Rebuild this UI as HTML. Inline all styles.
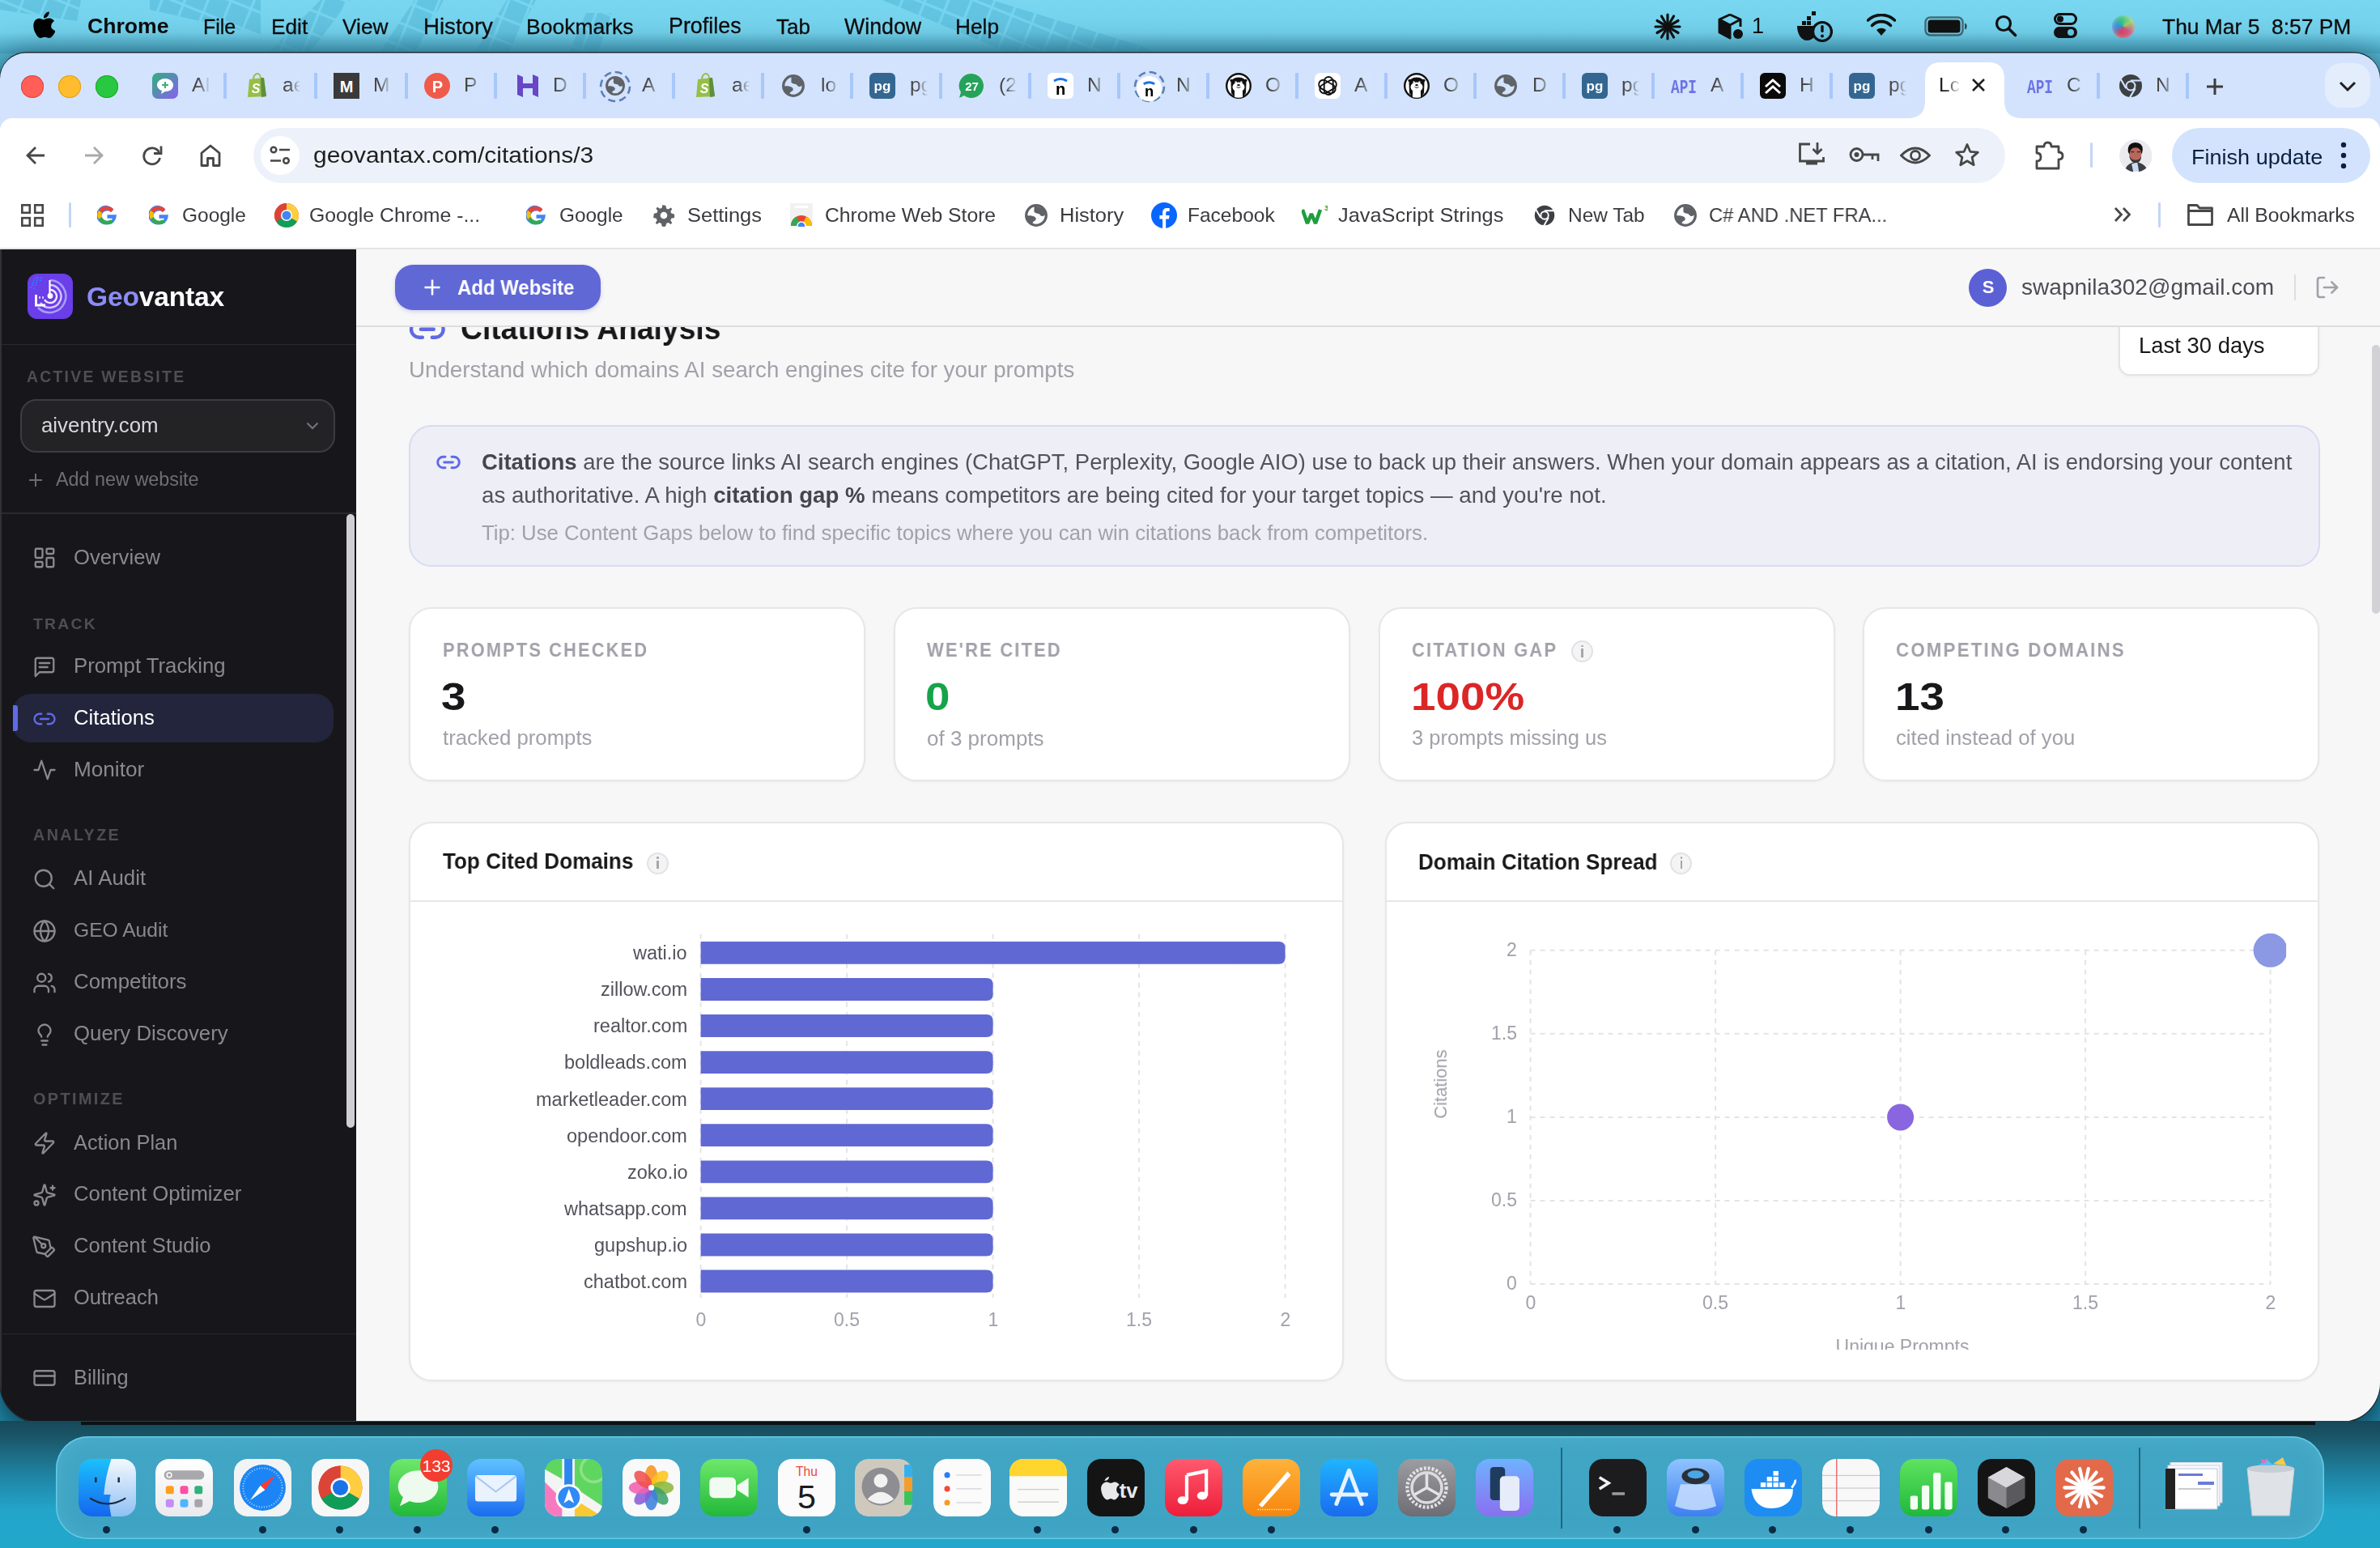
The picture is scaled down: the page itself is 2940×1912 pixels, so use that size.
<!DOCTYPE html>
<html><head><meta charset="utf-8"><title>Geovantax</title>
<style>*{box-sizing:border-box;margin:0;padding:0}
html,body{width:2940px;height:1912px;overflow:hidden}
body{position:relative;font-family:"Liberation Sans",sans-serif;background:#1f9cc4}
div,svg{position:absolute}
.t{white-space:pre;line-height:1;will-change:transform}
</style></head><body>
<div style="left:0;top:0;width:2940px;height:1912px;background:linear-gradient(180deg,#78d6f0 0px,#74d2ec 40px,#58bcd9 64px,#3a9fc0 400px,#2a9cc2 1600px,#22a7cb 1912px)"></div><svg style="left:0;top:0" width="1500" height="66" viewBox="0 0 1500 66"><defs><pattern id="sq" width="26.5" height="26.5" patternUnits="userSpaceOnUse" patternTransform="rotate(22)"><rect x="1.5" y="1.5" width="23.5" height="23.5" fill="#4fb3d3" opacity="0.5"/></pattern></defs><polygon points="0,0 100,0 95,26 0,12" fill="url(#sq)"/><polygon points="185,0 322,0 322,42 292,36 185,12" fill="url(#sq)"/><polygon points="330,66 382,66 432,0 396,0" fill="url(#sq)"/><polygon points="468,66 512,66 548,0 512,0" fill="url(#sq)"/><polygon points="586,66 628,66 662,0 626,0" fill="url(#sq)"/><polygon points="702,66 738,66 756,16 724,16" fill="url(#sq)"/><polygon points="1090,0 1225,0 1440,66 1248,66" fill="url(#sq)"/></svg><div style="left:0;top:40px;width:2940px;height:26px;background:linear-gradient(180deg,rgba(40,110,140,0) 0%,rgba(40,110,140,0.2) 100%)"></div><svg style="left:40px;top:14px" width="28" height="33" viewBox="0 0 170 200"><path fill="#000" d="M150 155c-8 18-12 26-22 41-14 21-34 47-59 47-22 0-28-14-58-14-30 0-37 15-59 15" transform="translate(0,-40)" opacity="0"/><path fill="#000" d="M141 106c0-27 22-40 23-41-13-19-32-21-39-21-17-2-32 10-40 10-8 0-21-9-34-9C33 45 8 61 8 100c0 24 9 50 21 66 10 14 19 26 32 26 13-1 18-8 33-8 15 0 20 8 33 8 14 0 23-13 31-25 10-14 14-28 14-29-1 0-31-12-31-32zM115 28c7-9 12-21 11-33-10 1-23 7-30 16-7 8-13 20-11 32 11 1 23-6 30-15z" transform="translate(0,8)"/></svg><div class=t style="left:108.0px;top:19.4px;font-size:26.60px;font-weight:700;color:#0d0d0d;letter-spacing:0em;font-family:'Liberation Sans';">Chrome</div><div class=t style="left:250.8px;top:21.0px;font-size:24.95px;font-weight:400;color:#0d0d0d;letter-spacing:0em;font-family:'Liberation Sans';-webkit-text-stroke:0.3px #0d0d0d">File</div><div class=t style="left:334.8px;top:19.9px;font-size:26.23px;font-weight:400;color:#0d0d0d;letter-spacing:0em;font-family:'Liberation Sans';-webkit-text-stroke:0.3px #0d0d0d">Edit</div><div class=t style="left:422.5px;top:19.9px;font-size:26.28px;font-weight:400;color:#0d0d0d;letter-spacing:0em;font-family:'Liberation Sans';-webkit-text-stroke:0.3px #0d0d0d">View</div><div class=t style="left:522.5px;top:18.7px;font-size:27.61px;font-weight:400;color:#0d0d0d;letter-spacing:0em;font-family:'Liberation Sans';-webkit-text-stroke:0.3px #0d0d0d">History</div><div class=t style="left:650.4px;top:19.7px;font-size:26.51px;font-weight:400;color:#0d0d0d;letter-spacing:0em;font-family:'Liberation Sans';-webkit-text-stroke:0.3px #0d0d0d">Bookmarks</div><div class=t style="left:826.4px;top:19.4px;font-size:26.87px;font-weight:400;color:#0d0d0d;letter-spacing:0em;font-family:'Liberation Sans';-webkit-text-stroke:0.3px #0d0d0d">Profiles</div><div class=t style="left:958.6px;top:20.1px;font-size:26.05px;font-weight:400;color:#0d0d0d;letter-spacing:0em;font-family:'Liberation Sans';-webkit-text-stroke:0.3px #0d0d0d">Tab</div><div class=t style="left:1042.6px;top:19.5px;font-size:26.74px;font-weight:400;color:#0d0d0d;letter-spacing:0em;font-family:'Liberation Sans';-webkit-text-stroke:0.3px #0d0d0d">Window</div><div class=t style="left:1180.0px;top:19.9px;font-size:26.26px;font-weight:400;color:#0d0d0d;letter-spacing:0em;font-family:'Liberation Sans';-webkit-text-stroke:0.3px #0d0d0d">Help</div><div class=t style="left:2671.0px;top:19.6px;font-size:26.41px;font-weight:400;color:#0d0d0d;letter-spacing:0em;font-family:'Liberation Sans';-webkit-text-stroke:0.3px #0d0d0d">Thu Mar 5  8:57 PM</div><svg style="left:2043px;top:16px" width="34" height="34" viewBox="0 0 34 34"><g stroke="#111" stroke-width="3.2" stroke-linecap="round"><line x1="17" y1="17" x2="32.0" y2="17.0"/><line x1="17" y1="17" x2="30.0" y2="24.5"/><line x1="17" y1="17" x2="24.5" y2="30.0"/><line x1="17" y1="17" x2="17.0" y2="32.0"/><line x1="17" y1="17" x2="9.5" y2="30.0"/><line x1="17" y1="17" x2="4.0" y2="24.5"/><line x1="17" y1="17" x2="2.0" y2="17.0"/><line x1="17" y1="17" x2="4.0" y2="9.5"/><line x1="17" y1="17" x2="9.5" y2="4.0"/><line x1="17" y1="17" x2="17.0" y2="2.0"/><line x1="17" y1="17" x2="24.5" y2="4.0"/><line x1="17" y1="17" x2="30.0" y2="9.5"/></g></svg><svg style="left:2121px;top:16px" width="34" height="34" viewBox="0 0 34 34"><path d="M16 2 L29 8 L29 17 M16 2 L3 8 L3 24 L16 31 L16 15 L3 8 M16 15 L29 8" fill="none" stroke="#111" stroke-width="3" stroke-linejoin="round"/><path d="M3 8 L16 15 L16 31 L3 24Z" fill="#111"/><circle cx="26" cy="26" r="6" fill="#111"/></svg><div class=t style="left:2164.0px;top:18.6px;font-size:27.00px;font-weight:400;color:#0d0d0d;letter-spacing:0em;font-family:'Liberation Sans';">1</div><svg style="left:2218px;top:14px" width="46" height="38" viewBox="0 0 46 38"><path d="M2 18 h26 c0 10-6 18-14 18 C7 36 2 28 2 18z" fill="#111"/><rect x="8" y="12" width="5" height="5" fill="#111"/><rect x="14" y="12" width="5" height="5" fill="#111"/><rect x="14" y="6" width="5" height="5" fill="#111"/><rect x="20" y="0" width="5" height="5" fill="#111"/><circle cx="33" cy="25" r="11.5" fill="#6cc9e6" stroke="#111" stroke-width="3.2"/><rect x="31.3" y="17" width="3.4" height="9" rx="1.5" fill="#111"/><circle cx="33" cy="30.5" r="2" fill="#111"/></svg><svg style="left:2306px;top:17px" width="36" height="28" viewBox="0 0 36 28"><path d="M18 27 L12 20 A9 9 0 0 1 24 20 Z" fill="#111"/><path d="M6.5 14.5 A16 16 0 0 1 29.5 14.5" fill="none" stroke="#111" stroke-width="3.6" stroke-linecap="round"/><path d="M1.5 8 A24 24 0 0 1 34.5 8" fill="none" stroke="#111" stroke-width="3.6" stroke-linecap="round"/></svg><svg style="left:2377px;top:20px" width="54" height="25" viewBox="0 0 54 25"><rect x="1.5" y="1.5" width="46" height="22" rx="6" fill="none" stroke="#1a1a1a" stroke-opacity="0.55" stroke-width="2.5"/><rect x="4.5" y="4.5" width="40" height="16" rx="3.5" fill="#111"/><path d="M50.5 9 q2.5 3.5 0 7" fill="#1a1a1a" stroke="#1a1a1a" stroke-opacity=".6" stroke-width="2"/></svg><svg style="left:2464px;top:18px" width="28" height="28" viewBox="0 0 28 28"><circle cx="11" cy="11" r="8.5" fill="none" stroke="#111" stroke-width="3.2"/><line x1="17.5" y1="17.5" x2="25.5" y2="25.5" stroke="#111" stroke-width="3.6" stroke-linecap="round"/></svg><svg style="left:2537px;top:16px" width="29" height="31" viewBox="0 0 29 31"><rect x="1.5" y="1.5" width="26" height="12" rx="6" fill="none" stroke="#111" stroke-width="3"/><circle cx="8" cy="7.5" r="4" fill="#111"/><rect x="0" y="17" width="29" height="14" rx="7" fill="#111"/><circle cx="21" cy="24" r="4" fill="#6cc9e6"/></svg><div style="left:2609px;top:19px;width:28px;height:28px;border-radius:50%;background:conic-gradient(from 200deg,#e0455e,#3b8fe0,#35c28a,#9ad070,#d45a8a,#e0455e);box-shadow:inset 0 0 6px rgba(255,255,255,0.5)"></div><div style="left:-1px;top:64px;width:2942px;height:1694px;border-radius:34px 34px 50px 50px;background:#1c2c33;box-shadow:0 14px 40px 8px rgba(8,40,55,0.75)"></div><div style="left:0;top:0;width:2940px;height:1912px;clip-path:inset(65.5px 0px 156px 0px round 32px 32px 48px 48px)"><div style="left:0;top:65px;width:2940px;height:110px;background:#d3e3fd"></div><div style="left:26px;top:93px;width:28px;height:28px;border-radius:50%;background:#ff5f57;box-shadow:inset 0 0 0 1px #e2463f"></div><div style="left:72px;top:93px;width:28px;height:28px;border-radius:50%;background:#febc2e;box-shadow:inset 0 0 0 1px #e1a116"></div><div style="left:118px;top:93px;width:28px;height:28px;border-radius:50%;background:#28c840;box-shadow:inset 0 0 0 1px #1aab29"></div><div style="left:276.0px;top:90px;width:4px;height:32px;background:#a8c7fa"></div><div style="left:388.0px;top:90px;width:4px;height:32px;background:#a8c7fa"></div><div style="left:499.6px;top:90px;width:4px;height:32px;background:#a8c7fa"></div><div style="left:610.0px;top:90px;width:4px;height:32px;background:#a8c7fa"></div><div style="left:720.0px;top:90px;width:4px;height:32px;background:#a8c7fa"></div><div style="left:829.6px;top:90px;width:4px;height:32px;background:#a8c7fa"></div><div style="left:939.7px;top:90px;width:4px;height:32px;background:#a8c7fa"></div><div style="left:1050.0px;top:90px;width:4px;height:32px;background:#a8c7fa"></div><div style="left:1160.0px;top:90px;width:4px;height:32px;background:#a8c7fa"></div><div style="left:1270.2px;top:90px;width:4px;height:32px;background:#a8c7fa"></div><div style="left:1379.8px;top:90px;width:4px;height:32px;background:#a8c7fa"></div><div style="left:1489.7px;top:90px;width:4px;height:32px;background:#a8c7fa"></div><div style="left:1599.6px;top:90px;width:4px;height:32px;background:#a8c7fa"></div><div style="left:1709.6px;top:90px;width:4px;height:32px;background:#a8c7fa"></div><div style="left:1820.0px;top:90px;width:4px;height:32px;background:#a8c7fa"></div><div style="left:1929.6px;top:90px;width:4px;height:32px;background:#a8c7fa"></div><div style="left:2039.7px;top:90px;width:4px;height:32px;background:#a8c7fa"></div><div style="left:2150.0px;top:90px;width:4px;height:32px;background:#a8c7fa"></div><div style="left:2259.8px;top:90px;width:4px;height:32px;background:#a8c7fa"></div><div style="left:2589.6px;top:90px;width:4px;height:32px;background:#a8c7fa"></div><div style="left:2699.7px;top:90px;width:4px;height:32px;background:#a8c7fa"></div><svg style="left:187.8px;top:90px" width="32" height="32" viewBox="0 0 32 32"><defs><linearGradient id="g1" x1="0" y1="0" x2="1" y2="1"><stop offset="0" stop-color="#2fb37a"/><stop offset="1" stop-color="#8b5cf6"/></linearGradient></defs><rect width="32" height="32" rx="7" fill="url(#g1)"/><path d="M16 7 c6 0 10 4 10 8 c0 5-4 8-10 8 l-5 3 l1-4 c-3-1-6-4-6-7 c0-4 4-8 10-8z" fill="#fff"/><path d="M12 15 h8 M16 11 v8" stroke="#2fb37a" stroke-width="2"/></svg><svg style="left:302.0px;top:90px" width="32" height="32" viewBox="0 0 32 32"><path d="M6 8 L24 6 L27 29 L4 30 Z" fill="#95bf47"/><path d="M20 6 L24 6 L27 29 L21 30Z" fill="#5e8e3e"/><path d="M11 8 c0-5 3-7 5-7 c2 0 4 2 4 6" fill="none" stroke="#95bf47" stroke-width="2"/><text x="14" y="25" font-family="Liberation Sans" font-weight="700" font-style="italic" font-size="16" fill="#fff" text-anchor="middle">S</text></svg><svg style="left:412.0px;top:90px" width="32" height="32" viewBox="0 0 32 32"><rect width="32" height="32" fill="#3a3a3a"/><text x="16" y="24" font-family="Liberation Sans" font-weight="700" font-size="20" fill="#fff" text-anchor="middle">M</text></svg><svg style="left:524.0px;top:90px" width="32" height="32" viewBox="0 0 32 32"><circle cx="16" cy="16" r="16" fill="#f05a4a"/><text x="16.5" y="23.5" font-family="Liberation Sans" font-weight="700" font-size="20" fill="#fff" text-anchor="middle">P</text></svg><svg style="left:636.0px;top:90px" width="32" height="32" viewBox="0 0 32 32"><path d="M3 2 L10 5 L10 13 L22 13 L22 2 L29 5 L29 30 L22 27 L22 19 L10 19 L10 30 L3 27 Z" fill="#6747c7"/></svg><svg style="left:740.0px;top:86.5px" width="40" height="40" viewBox="0 0 40 40"><circle cx="20" cy="20" r="18" fill="none" stroke="#5b7fb8" stroke-width="2.6" stroke-dasharray="9 5"/></svg><svg style="left:747.6px;top:94px" width="24" height="24" viewBox="0 0 32 32"><g transform="scale(1.1428)"><circle cx="14" cy="14" r="12.3" fill="none" stroke="#5f6368" stroke-width="3.3"/><path d="M11.5 3 C15 2.5 22 4 25.5 9 C26.5 12 24.5 15 21.5 15 C19 15 19 12.5 17 12 C14 11.5 10.5 11 11.5 7 Z" fill="#5f6368"/><path d="M1.5 14.5 C5 14 10 14 12.5 16 C14.5 17.5 14 20.5 11.5 21 C10 21.5 9.5 23.5 9 25.5 C5 23.5 2 19.5 1.5 14.5 Z" fill="#5f6368"/></g></svg><svg style="left:856.0px;top:90px" width="32" height="32" viewBox="0 0 32 32"><path d="M6 8 L24 6 L27 29 L4 30 Z" fill="#95bf47"/><path d="M20 6 L24 6 L27 29 L21 30Z" fill="#5e8e3e"/><path d="M11 8 c0-5 3-7 5-7 c2 0 4 2 4 6" fill="none" stroke="#95bf47" stroke-width="2"/><text x="14" y="25" font-family="Liberation Sans" font-weight="700" font-style="italic" font-size="16" fill="#fff" text-anchor="middle">S</text></svg><svg style="left:966.0px;top:92px" width="28" height="28" viewBox="0 0 32 32"><g transform="scale(1.1428)"><circle cx="14" cy="14" r="12.3" fill="none" stroke="#5f6368" stroke-width="3.3"/><path d="M11.5 3 C15 2.5 22 4 25.5 9 C26.5 12 24.5 15 21.5 15 C19 15 19 12.5 17 12 C14 11.5 10.5 11 11.5 7 Z" fill="#5f6368"/><path d="M1.5 14.5 C5 14 10 14 12.5 16 C14.5 17.5 14 20.5 11.5 21 C10 21.5 9.5 23.5 9 25.5 C5 23.5 2 19.5 1.5 14.5 Z" fill="#5f6368"/></g></svg><svg style="left:1074.0px;top:90px" width="32" height="32" viewBox="0 0 32 32"><rect x="0" y="0" width="32" height="32" rx="6" fill="#336791"/><text x="16" y="22" font-family="Liberation Sans" font-weight="700" font-size="17" fill="#fff" text-anchor="middle">pg</text></svg><svg style="left:1184.0px;top:90px" width="32" height="32" viewBox="0 0 32 32"><path d="M16 1 a15 15 0 1 1 -9 27 l-6 3 l2-7 a15 15 0 0 1 13-23z" fill="#25a35a"/><text x="16.5" y="22" font-family="Liberation Sans" font-weight="700" font-size="15" fill="#fff" text-anchor="middle">27</text></svg><svg style="left:1294.0px;top:90px" width="32" height="32" viewBox="0 0 32 32"><rect width="32" height="32" rx="6" fill="#fff"/><path d="M8 10 q8-5 16 0" stroke="#1a73e8" stroke-width="3" fill="none"/><text x="16" y="27" font-family="Liberation Sans" font-weight="700" font-size="20" fill="#000" text-anchor="middle">n</text></svg><svg style="left:1399.5px;top:86.5px" width="40" height="40" viewBox="0 0 40 40"><circle cx="20" cy="20" r="18" fill="none" stroke="#5b7fb8" stroke-width="2.6" stroke-dasharray="9 5"/></svg><svg style="left:1404.0px;top:94px" width="31" height="31" viewBox="0 0 32 32"><circle cx="16" cy="16" r="16" fill="#fff"/><path d="M9 10 q7-4 14 0" stroke="#1a73e8" stroke-width="3" fill="none"/><text x="16" y="26" font-family="Liberation Sans" font-weight="700" font-size="19" fill="#000" text-anchor="middle">n</text></svg><svg style="left:1514.0px;top:90px" width="32" height="32" viewBox="0 0 32 32"><circle cx="16" cy="16" r="14.8" fill="#fff" stroke="#111" stroke-width="2.4"/><path d="M6.5 12 Q7 6 16 5.5 Q25 6 25.5 12 L25 25 Q23 28 21 29 L21 22 Q16 24 11 22 L11 29 Q9 28 7 25Z" fill="#111"/><circle cx="7.2" cy="9.5" r="1.8" fill="#111"/><circle cx="24.8" cy="9.5" r="1.8" fill="#111"/><ellipse cx="16" cy="17.5" rx="7.5" ry="6" fill="#fff"/><path d="M11 22 Q16 30 21 22 L21 30 Q16 31.5 11 30Z" fill="#fff"/><rect x="11.5" y="10.5" width="2.2" height="2.2" fill="#fff"/><rect x="18.3" y="10.5" width="2.2" height="2.2" fill="#fff"/><ellipse cx="16" cy="15.2" rx="1.8" ry="1.1" fill="#111"/><path d="M13.5 17.5 Q16 19.5 18.5 17.5" fill="none" stroke="#111" stroke-width="0.9"/></svg><svg style="left:1624.0px;top:90px" width="32" height="32" viewBox="0 0 32 32"><rect width="32" height="32" rx="7" fill="#fff"/><g fill="none" stroke="#111" stroke-width="1.9" transform="translate(16 16)"><rect x="-5.5" y="-11" width="11" height="22" rx="5.5" transform="rotate(0) translate(1.2 0)"/><rect x="-5.5" y="-11" width="11" height="22" rx="5.5" transform="rotate(60) translate(1.2 0)"/><rect x="-5.5" y="-11" width="11" height="22" rx="5.5" transform="rotate(120) translate(1.2 0)"/></g></svg><svg style="left:1734.0px;top:90px" width="32" height="32" viewBox="0 0 32 32"><circle cx="16" cy="16" r="14.8" fill="#fff" stroke="#111" stroke-width="2.4"/><path d="M6.5 12 Q7 6 16 5.5 Q25 6 25.5 12 L25 25 Q23 28 21 29 L21 22 Q16 24 11 22 L11 29 Q9 28 7 25Z" fill="#111"/><circle cx="7.2" cy="9.5" r="1.8" fill="#111"/><circle cx="24.8" cy="9.5" r="1.8" fill="#111"/><ellipse cx="16" cy="17.5" rx="7.5" ry="6" fill="#fff"/><path d="M11 22 Q16 30 21 22 L21 30 Q16 31.5 11 30Z" fill="#fff"/><rect x="11.5" y="10.5" width="2.2" height="2.2" fill="#fff"/><rect x="18.3" y="10.5" width="2.2" height="2.2" fill="#fff"/><ellipse cx="16" cy="15.2" rx="1.8" ry="1.1" fill="#111"/><path d="M13.5 17.5 Q16 19.5 18.5 17.5" fill="none" stroke="#111" stroke-width="0.9"/></svg><svg style="left:1846.0px;top:92px" width="28" height="28" viewBox="0 0 32 32"><g transform="scale(1.1428)"><circle cx="14" cy="14" r="12.3" fill="none" stroke="#5f6368" stroke-width="3.3"/><path d="M11.5 3 C15 2.5 22 4 25.5 9 C26.5 12 24.5 15 21.5 15 C19 15 19 12.5 17 12 C14 11.5 10.5 11 11.5 7 Z" fill="#5f6368"/><path d="M1.5 14.5 C5 14 10 14 12.5 16 C14.5 17.5 14 20.5 11.5 21 C10 21.5 9.5 23.5 9 25.5 C5 23.5 2 19.5 1.5 14.5 Z" fill="#5f6368"/></g></svg><svg style="left:1954.0px;top:90px" width="32" height="32" viewBox="0 0 32 32"><rect x="0" y="0" width="32" height="32" rx="6" fill="#336791"/><text x="16" y="22" font-family="Liberation Sans" font-weight="700" font-size="17" fill="#fff" text-anchor="middle">pg</text></svg><svg style="left:2064.0px;top:90px" width="32" height="32" viewBox="0 0 32 32"><text x="0" y="25" font-family="Liberation Mono" font-weight="700" font-size="24" fill="#6b74e6" textLength="32" lengthAdjust="spacingAndGlyphs">API</text></svg><svg style="left:2174.0px;top:90px" width="32" height="32" viewBox="0 0 32 32"><rect width="32" height="32" rx="6" fill="#0a0a0a"/><path d="M7 17 L16 9 L25 17 M7 25 L16 17 L25 25" fill="none" stroke="#fff" stroke-width="3"/></svg><svg style="left:2284.0px;top:90px" width="32" height="32" viewBox="0 0 32 32"><rect x="0" y="0" width="32" height="32" rx="6" fill="#336791"/><text x="16" y="22" font-family="Liberation Sans" font-weight="700" font-size="17" fill="#fff" text-anchor="middle">pg</text></svg><svg style="left:2504.0px;top:90px" width="32" height="32" viewBox="0 0 32 32"><text x="0" y="25" font-family="Liberation Mono" font-weight="700" font-size="24" fill="#6b74e6" textLength="32" lengthAdjust="spacingAndGlyphs">API</text></svg><svg style="left:2616.0px;top:90px" width="32" height="32" viewBox="0 0 32 32"><circle cx="16" cy="16" r="14" fill="#3c4043"/><circle cx="16" cy="16" r="6.5" fill="#d3e3fd"/><circle cx="16" cy="16" r="4.5" fill="#3c4043"/><path d="M16 9.5 H29 M10.4 19.2 L3.9 8 M21.6 19.2 L15 30.5" stroke="#d3e3fd" stroke-width="2.2"/></svg><div class=t style="left:237.0px;top:93.2px;font-size:24.50px;font-weight:400;color:#474747;letter-spacing:0em;font-family:'Liberation Sans';">AI</div><div class=t style="left:348.6px;top:93.2px;font-size:24.50px;font-weight:400;color:#474747;letter-spacing:0em;font-family:'Liberation Sans';">ae</div><div class=t style="left:460.8px;top:93.2px;font-size:24.50px;font-weight:400;color:#474747;letter-spacing:0em;font-family:'Liberation Sans';">M</div><div class=t style="left:572.7px;top:93.2px;font-size:24.50px;font-weight:400;color:#474747;letter-spacing:0em;font-family:'Liberation Sans';">P</div><div class=t style="left:683.0px;top:93.2px;font-size:24.50px;font-weight:400;color:#474747;letter-spacing:0em;font-family:'Liberation Sans';">D</div><div class=t style="left:793.0px;top:93.2px;font-size:24.50px;font-weight:400;color:#474747;letter-spacing:0em;font-family:'Liberation Sans';">A</div><div class=t style="left:904.0px;top:93.2px;font-size:24.50px;font-weight:400;color:#474747;letter-spacing:0em;font-family:'Liberation Sans';">ae</div><div class=t style="left:1014.0px;top:93.2px;font-size:24.50px;font-weight:400;color:#474747;letter-spacing:0em;font-family:'Liberation Sans';">lo</div><div class=t style="left:1124.0px;top:93.2px;font-size:24.50px;font-weight:400;color:#474747;letter-spacing:0em;font-family:'Liberation Sans';">pg</div><div class=t style="left:1234.0px;top:93.2px;font-size:24.50px;font-weight:400;color:#474747;letter-spacing:0em;font-family:'Liberation Sans';">(2</div><div class=t style="left:1343.0px;top:93.2px;font-size:24.50px;font-weight:400;color:#474747;letter-spacing:0em;font-family:'Liberation Sans';">N</div><div class=t style="left:1453.0px;top:93.2px;font-size:24.50px;font-weight:400;color:#474747;letter-spacing:0em;font-family:'Liberation Sans';">N</div><div class=t style="left:1562.6px;top:93.2px;font-size:24.50px;font-weight:400;color:#474747;letter-spacing:0em;font-family:'Liberation Sans';">O</div><div class=t style="left:1673.0px;top:93.2px;font-size:24.50px;font-weight:400;color:#474747;letter-spacing:0em;font-family:'Liberation Sans';">A</div><div class=t style="left:1782.9px;top:93.2px;font-size:24.50px;font-weight:400;color:#474747;letter-spacing:0em;font-family:'Liberation Sans';">O</div><div class=t style="left:1893.0px;top:93.2px;font-size:24.50px;font-weight:400;color:#474747;letter-spacing:0em;font-family:'Liberation Sans';">D</div><div class=t style="left:2003.0px;top:93.2px;font-size:24.50px;font-weight:400;color:#474747;letter-spacing:0em;font-family:'Liberation Sans';">pg</div><div class=t style="left:2112.6px;top:93.2px;font-size:24.50px;font-weight:400;color:#474747;letter-spacing:0em;font-family:'Liberation Sans';">A</div><div class=t style="left:2222.7px;top:93.2px;font-size:24.50px;font-weight:400;color:#474747;letter-spacing:0em;font-family:'Liberation Sans';">H</div><div class=t style="left:2333.0px;top:93.2px;font-size:24.50px;font-weight:400;color:#474747;letter-spacing:0em;font-family:'Liberation Sans';">pg</div><div class=t style="left:2552.5px;top:93.2px;font-size:24.50px;font-weight:400;color:#474747;letter-spacing:0em;font-family:'Liberation Sans';">C</div><div class=t style="left:2663.0px;top:93.2px;font-size:24.50px;font-weight:400;color:#474747;letter-spacing:0em;font-family:'Liberation Sans';">N</div><div style="left:245.0px;top:90px;width:24px;height:34px;background:linear-gradient(90deg,rgba(211,227,253,0),#d3e3fd 60%)"></div><div style="left:356.6px;top:90px;width:24px;height:34px;background:linear-gradient(90deg,rgba(211,227,253,0),#d3e3fd 60%)"></div><div style="left:468.8px;top:90px;width:24px;height:34px;background:linear-gradient(90deg,rgba(211,227,253,0),#d3e3fd 60%)"></div><div style="left:580.7px;top:90px;width:24px;height:34px;background:linear-gradient(90deg,rgba(211,227,253,0),#d3e3fd 60%)"></div><div style="left:691.0px;top:90px;width:24px;height:34px;background:linear-gradient(90deg,rgba(211,227,253,0),#d3e3fd 60%)"></div><div style="left:801.0px;top:90px;width:24px;height:34px;background:linear-gradient(90deg,rgba(211,227,253,0),#d3e3fd 60%)"></div><div style="left:912.0px;top:90px;width:24px;height:34px;background:linear-gradient(90deg,rgba(211,227,253,0),#d3e3fd 60%)"></div><div style="left:1022.0px;top:90px;width:24px;height:34px;background:linear-gradient(90deg,rgba(211,227,253,0),#d3e3fd 60%)"></div><div style="left:1132.0px;top:90px;width:24px;height:34px;background:linear-gradient(90deg,rgba(211,227,253,0),#d3e3fd 60%)"></div><div style="left:1242.0px;top:90px;width:24px;height:34px;background:linear-gradient(90deg,rgba(211,227,253,0),#d3e3fd 60%)"></div><div style="left:1351.0px;top:90px;width:24px;height:34px;background:linear-gradient(90deg,rgba(211,227,253,0),#d3e3fd 60%)"></div><div style="left:1461.0px;top:90px;width:24px;height:34px;background:linear-gradient(90deg,rgba(211,227,253,0),#d3e3fd 60%)"></div><div style="left:1570.6px;top:90px;width:24px;height:34px;background:linear-gradient(90deg,rgba(211,227,253,0),#d3e3fd 60%)"></div><div style="left:1681.0px;top:90px;width:24px;height:34px;background:linear-gradient(90deg,rgba(211,227,253,0),#d3e3fd 60%)"></div><div style="left:1790.9px;top:90px;width:24px;height:34px;background:linear-gradient(90deg,rgba(211,227,253,0),#d3e3fd 60%)"></div><div style="left:1901.0px;top:90px;width:24px;height:34px;background:linear-gradient(90deg,rgba(211,227,253,0),#d3e3fd 60%)"></div><div style="left:2011.0px;top:90px;width:24px;height:34px;background:linear-gradient(90deg,rgba(211,227,253,0),#d3e3fd 60%)"></div><div style="left:2120.6px;top:90px;width:24px;height:34px;background:linear-gradient(90deg,rgba(211,227,253,0),#d3e3fd 60%)"></div><div style="left:2230.7px;top:90px;width:24px;height:34px;background:linear-gradient(90deg,rgba(211,227,253,0),#d3e3fd 60%)"></div><div style="left:2341.0px;top:90px;width:24px;height:34px;background:linear-gradient(90deg,rgba(211,227,253,0),#d3e3fd 60%)"></div><div style="left:2560.5px;top:90px;width:24px;height:34px;background:linear-gradient(90deg,rgba(211,227,253,0),#d3e3fd 60%)"></div><div style="left:2671.0px;top:90px;width:24px;height:34px;background:linear-gradient(90deg,rgba(211,227,253,0),#d3e3fd 60%)"></div><svg style="left:2356px;top:77px" width="142" height="70" viewBox="0 0 142 70"><path d="M0 69 Q22 69 22 48 L22 20 Q22 0 42 0 L100 0 Q120 0 120 20 L120 48 Q120 69 142 69 Z" fill="#fff"/></svg><div class=t style="left:2395.0px;top:93.2px;font-size:24.50px;font-weight:400;color:#1f1f1f;letter-spacing:0em;font-family:'Liberation Sans';">Lc</div><div style="left:2404px;top:92px;width:22px;height:30px;background:linear-gradient(90deg,rgba(255,255,255,0),#fff 80%)"></div><svg style="left:2435px;top:96px" width="18" height="18" viewBox="0 0 18 18"><path d="M2 2 L16 16 M16 2 L2 16" stroke="#1f1f1f" stroke-width="2.6"/></svg><svg style="left:2724px;top:95px" width="24" height="24" viewBox="0 0 24 24"><path d="M12 2 V22 M2 12 H22" stroke="#3c3c3c" stroke-width="3"/></svg><div style="left:2872px;top:78px;width:56px;height:55px;border-radius:20px;background:#e4edfc"></div><svg style="left:2889px;top:100px" width="22" height="14" viewBox="0 0 22 14"><path d="M2 2 L11 11 L20 2" fill="none" stroke="#1f1f1f" stroke-width="3"/></svg><div style="left:0;top:145.5px;width:2940px;height:161px;background:#fff;border-radius:15px 15px 0 0"></div><div style="left:0;top:305.5px;width:2940px;height:2px;background:#e4e4e4"></div><svg style="left:32px;top:180px" width="24" height="24" viewBox="0 0 24 24"><path d="M23 12 H3 M12 2 L2 12 L12 22" fill="none" stroke="#474747" stroke-width="2.8"/></svg><svg style="left:104px;top:180px" width="24" height="24" viewBox="0 0 24 24"><path d="M1 12 H21 M12 2 L22 12 L12 22" fill="none" stroke="#a9a9a9" stroke-width="2.8"/></svg><svg style="left:175px;top:179px" width="26" height="26" viewBox="0 0 26 26"><path d="M21.5 9 A10 10 0 1 0 22.5 16" fill="none" stroke="#474747" stroke-width="2.8"/><path d="M24 1.5 V10.5 H15" fill="none" stroke="#474747" stroke-width="2.8"/></svg><svg style="left:247px;top:178px" width="26" height="28" viewBox="0 0 26 28"><path d="M2 26.5 V11 L13 2 L24 11 V26.5 H16.5 V17.5 H9.5 V26.5 Z" fill="none" stroke="#474747" stroke-width="2.8" stroke-linejoin="round"/></svg><div style="left:312.5px;top:158px;width:2164px;height:67.5px;border-radius:34px;background:#edf2fa"></div><div style="left:322px;top:167.5px;width:48px;height:48px;border-radius:50%;background:#fff"></div><svg style="left:333px;top:180px" width="26" height="24" viewBox="0 0 26 24"><circle cx="5" cy="5" r="3.3" fill="none" stroke="#474747" stroke-width="2.5"/><path d="M12 5 H25 M1 18.5 H14" stroke="#474747" stroke-width="2.5"/><circle cx="20.5" cy="18.5" r="3.3" fill="none" stroke="#474747" stroke-width="2.5"/></svg><div class=t style="left:386.7px;top:178.1px;font-size:27.85px;font-weight:400;color:#1f1f1f;letter-spacing:0em;font-family:'Liberation Sans';transform:scaleX(1.0753);transform-origin:0 0;">geovantax.com/citations/3</div><svg style="left:2221px;top:175px" width="34" height="32" viewBox="0 0 34 32"><path d="M15 3 H2.5 V24 H31.5 V19" fill="none" stroke="#474747" stroke-width="2.8"/><rect x="10" y="24" width="14" height="4.5" fill="#474747"/><path d="M24 1 V14 M18.5 9 L24 14.5 L29.5 9" fill="none" stroke="#474747" stroke-width="2.8"/></svg><svg style="left:2284px;top:180px" width="38" height="24" viewBox="0 0 38 24"><circle cx="9.5" cy="11" r="7.5" fill="none" stroke="#474747" stroke-width="2.8"/><circle cx="9.5" cy="11" r="3" fill="#474747"/><path d="M17 11 H36 V19 M29 11 V17" fill="none" stroke="#474747" stroke-width="2.8"/></svg><svg style="left:2347px;top:179px" width="38" height="26" viewBox="0 0 38 26"><path d="M1.5 13 Q19 -5 36.5 13 Q19 31 1.5 13 Z" fill="none" stroke="#474747" stroke-width="2.8"/><circle cx="19" cy="13" r="5.5" fill="none" stroke="#474747" stroke-width="2.8"/></svg><svg style="left:2414px;top:176px" width="32" height="31" viewBox="0 0 32 31"><path d="M16 2.5 L19.8 11.3 L29.3 12.1 L22.1 18.4 L24.2 27.7 L16 22.8 L7.8 27.7 L9.9 18.4 L2.7 12.1 L12.2 11.3 Z" fill="none" stroke="#474747" stroke-width="2.8" stroke-linejoin="round"/></svg><svg style="left:2514px;top:173px" width="36" height="38" viewBox="0 0 36 38"><path d="M2 8 H11 Q11 3 15.5 3 Q20 3 20 8 H29 V15 Q34 15 34 19.5 Q34 24 29 24 V35 H2 V26 Q7 26 7 21 Q7 16 2 16 Z" fill="none" stroke="#474747" stroke-width="2.8" stroke-linejoin="round"/></svg><div style="left:2582px;top:176px;width:3px;height:31px;border-radius:2px;background:#c2d5f5"></div><svg style="left:2617.5px;top:171.5px" width="40.5" height="40.5" viewBox="0 0 40 40"><defs><clipPath id="avc"><circle cx="20" cy="20" r="20"/></clipPath></defs><g clip-path="url(#avc)"><rect width="40" height="40" fill="#ebebef"/><path d="M6 40 L8 35 Q10 30 20 27 Q30 30 33 35 L36 40Z" fill="#3b3e42"/><path d="M15 30 L22 28 L24 40 L17 40Z" fill="#c9dbf0"/><ellipse cx="19.5" cy="18" rx="7.5" ry="9.5" fill="#b8675b"/><path d="M12 20 Q13 28 20 29 Q27 28 27 20 Q26 25 20 25.5 Q14 25 12 20Z" fill="#3a3636"/><path d="M10.5 14 Q10 5 19 4 Q28 4 28.5 12 Q28 17 27 18 Q26 10 20 10 Q13 10 12.5 18 Q11 17 10.5 14Z" fill="#111"/><path d="M14 15.5 h4 M21.5 15.5 h4" stroke="#2a2a2a" stroke-width="1.3"/></g></svg><div style="left:2682.5px;top:158px;width:245px;height:68px;border-radius:34px;background:#d3e3fd"></div><div class=t style="left:2706.6px;top:181.6px;font-size:25.16px;font-weight:400;color:#0b1f3f;letter-spacing:0em;font-family:'Liberation Sans';transform:scaleX(1.0753);transform-origin:0 0;">Finish update</div><svg style="left:2889px;top:174px" width="12" height="36" viewBox="0 0 12 36"><circle cx="6" cy="5" r="3.2" fill="#0b1f3f"/><circle cx="6" cy="18" r="3.2" fill="#0b1f3f"/><circle cx="6" cy="31" r="3.2" fill="#0b1f3f"/></svg><svg style="left:26px;top:252px" width="28" height="28" viewBox="0 0 28 28"><g fill="none" stroke="#474747" stroke-width="2.6"><rect x="1.3" y="1.3" width="9.5" height="9.5"/><rect x="17.2" y="1.3" width="9.5" height="9.5"/><rect x="1.3" y="17.2" width="9.5" height="9.5"/><rect x="17.2" y="17.2" width="9.5" height="9.5"/></g></svg><div style="left:84.5px;top:250px;width:3px;height:31px;border-radius:2px;background:#c2d5f5"></div><svg style="left:119.5px;top:253px" width="25" height="25" viewBox="0 0 25 25"><path d="M23.5 12.3h-11v4.5h6.3c-.6 3-3.2 4.6-6.3 4.6a7 7 0 1 1 4.5-12.3l3.4-3.4A11.8 11.8 0 1 0 12.5 24.3c6 0 11.3-4.3 11.3-11.8 0-.7-.1-1.4-.3-2.2z" fill="#4285f4"/><path d="M1.9 6.9l3.9 2.9A7 7 0 0 1 17 9l3.4-3.4A11.8 11.8 0 0 0 1.9 6.9z" fill="#ea4335"/><path d="M12.5 24.3c3 0 5.8-1 7.9-2.9l-3.7-3.1a7 7 0 0 1-10.8-3.6l-3.9 3A11.8 11.8 0 0 0 12.5 24.3z" fill="#34a853"/><path d="M5.9 14.7a7 7 0 0 1 0-4.9L1.9 6.9a11.8 11.8 0 0 0 0 10.8z" fill="#fbbc05"/></svg><svg style="left:183.5px;top:253px" width="25" height="25" viewBox="0 0 25 25"><path d="M23.5 12.3h-11v4.5h6.3c-.6 3-3.2 4.6-6.3 4.6a7 7 0 1 1 4.5-12.3l3.4-3.4A11.8 11.8 0 1 0 12.5 24.3c6 0 11.3-4.3 11.3-11.8 0-.7-.1-1.4-.3-2.2z" fill="#4285f4"/><path d="M1.9 6.9l3.9 2.9A7 7 0 0 1 17 9l3.4-3.4A11.8 11.8 0 0 0 1.9 6.9z" fill="#ea4335"/><path d="M12.5 24.3c3 0 5.8-1 7.9-2.9l-3.7-3.1a7 7 0 0 1-10.8-3.6l-3.9 3A11.8 11.8 0 0 0 12.5 24.3z" fill="#34a853"/><path d="M5.9 14.7a7 7 0 0 1 0-4.9L1.9 6.9a11.8 11.8 0 0 0 0 10.8z" fill="#fbbc05"/></svg><svg style="left:649.5px;top:253px" width="25" height="25" viewBox="0 0 25 25"><path d="M23.5 12.3h-11v4.5h6.3c-.6 3-3.2 4.6-6.3 4.6a7 7 0 1 1 4.5-12.3l3.4-3.4A11.8 11.8 0 1 0 12.5 24.3c6 0 11.3-4.3 11.3-11.8 0-.7-.1-1.4-.3-2.2z" fill="#4285f4"/><path d="M1.9 6.9l3.9 2.9A7 7 0 0 1 17 9l3.4-3.4A11.8 11.8 0 0 0 1.9 6.9z" fill="#ea4335"/><path d="M12.5 24.3c3 0 5.8-1 7.9-2.9l-3.7-3.1a7 7 0 0 1-10.8-3.6l-3.9 3A11.8 11.8 0 0 0 12.5 24.3z" fill="#34a853"/><path d="M5.9 14.7a7 7 0 0 1 0-4.9L1.9 6.9a11.8 11.8 0 0 0 0 10.8z" fill="#fbbc05"/></svg><div class=t style="left:224.9px;top:253.6px;font-size:24.40px;font-weight:400;color:#3b3b3f;letter-spacing:0em;font-family:'Liberation Sans';transform:scaleX(1.0028);transform-origin:0 0;">Google</div><svg style="left:337.5px;top:249.5px" width="32" height="32" viewBox="0 0 32 32"><circle cx="16" cy="16" r="15" fill="#db4437"/><path d="M16 16 L29 23.5 A15 15 0 0 1 3 23.5 Z" fill="#0f9d58"/><path d="M16 16 L29 23.5 A15 15 0 0 0 16 1 Z" fill="#ffcd40"/><path d="M16 1 A15 15 0 0 0 3 23.5 L16 16 Z" fill="#db4437"/><circle cx="16" cy="16" r="7" fill="#fff"/><circle cx="16" cy="16" r="5.5" fill="#4285f4"/></svg><div class=t style="left:382.4px;top:253.6px;font-size:24.40px;font-weight:400;color:#3b3b3f;letter-spacing:0em;font-family:'Liberation Sans';transform:scaleX(1.0179);transform-origin:0 0;">Google Chrome -...</div><div class=t style="left:691.0px;top:253.6px;font-size:24.40px;font-weight:400;color:#3b3b3f;letter-spacing:0em;font-family:'Liberation Sans';transform:scaleX(0.9990);transform-origin:0 0;">Google</div><svg style="left:806px;top:252px" width="28" height="28" viewBox="0 0 28 28"><path d="M14 1.5 l2.3 .3 .8 3.6 2.4 1 3.1-2 1.7 1.7-2 3.1 1 2.4 3.6.8 .3 2.3-.3 2.3-3.6.8-1 2.4 2 3.1-1.7 1.7-3.1-2-2.4 1-.8 3.6-2.3.3-2.3-.3-.8-3.6-2.4-1-3.1 2-1.7-1.7 2-3.1-1-2.4-3.6-.8L1.5 14l.3-2.3 3.6-.8 1-2.4-2-3.1 1.7-1.7 3.1 2 2.4-1 .8-3.6z" fill="#5f6368"/><circle cx="14" cy="14" r="4.3" fill="#fff"/></svg><div class=t style="left:848.5px;top:253.6px;font-size:24.40px;font-weight:400;color:#3b3b3f;letter-spacing:0em;font-family:'Liberation Sans';transform:scaleX(1.0435);transform-origin:0 0;">Settings</div><svg style="left:975px;top:250px" width="30" height="30" viewBox="0 0 30 30"><rect x="1" y="1" width="28" height="28" fill="#f1f1f1"/><rect x="7" y="4" width="16" height="3" fill="#fff"/><path d="M2 29 A13 13 0 0 1 28 29 Z" fill="#ea4335"/><path d="M15 29 L28 29 A13 13 0 0 0 21 17.5 Z" fill="#fbbc05"/><path d="M2 29 A13 13 0 0 1 9 17.5 L15 29Z" fill="#34a853"/><circle cx="15" cy="29" r="5" fill="#4285f4" stroke="#fff" stroke-width="1.5"/></svg><div class=t style="left:1018.6px;top:253.6px;font-size:24.40px;font-weight:400;color:#3b3b3f;letter-spacing:0em;font-family:'Liberation Sans';transform:scaleX(1.0135);transform-origin:0 0;">Chrome Web Store</div><svg style="left:1266px;top:252px" width="28" height="28" viewBox="0 0 32 32"><g transform="scale(1.1428)"><circle cx="14" cy="14" r="12.3" fill="none" stroke="#5f6368" stroke-width="3.3"/><path d="M11.5 3 C15 2.5 22 4 25.5 9 C26.5 12 24.5 15 21.5 15 C19 15 19 12.5 17 12 C14 11.5 10.5 11 11.5 7 Z" fill="#5f6368"/><path d="M1.5 14.5 C5 14 10 14 12.5 16 C14.5 17.5 14 20.5 11.5 21 C10 21.5 9.5 23.5 9 25.5 C5 23.5 2 19.5 1.5 14.5 Z" fill="#5f6368"/></g></svg><div class=t style="left:1308.7px;top:253.6px;font-size:24.40px;font-weight:400;color:#3b3b3f;letter-spacing:0em;font-family:'Liberation Sans';transform:scaleX(1.0445);transform-origin:0 0;">History</div><svg style="left:1422px;top:250px" width="32" height="32" viewBox="0 0 32 32"><circle cx="16" cy="16" r="16" fill="#0866ff"/><path d="M18.2 32 V20.5 H22 L22.6 16 H18.2 V13.3 C18.2 12 18.6 11.1 20.4 11.1 H22.7 V7.1 C22.3 7 21 6.9 19.5 6.9 C16.3 6.9 14.1 8.9 14.1 12.5 V16 H10.4 V20.5 H14.1 V32 Z" fill="#fff"/></svg><div class=t style="left:1467.0px;top:253.6px;font-size:24.40px;font-weight:400;color:#3b3b3f;letter-spacing:0em;font-family:'Liberation Sans';transform:scaleX(1.0051);transform-origin:0 0;">Facebook</div><svg style="left:1608px;top:252px" width="32" height="28" viewBox="0 0 32 28"><path d="M1 7 L7 24 L12 12 L17 24 L23 7" fill="none" stroke="#1e9e3e" stroke-width="4.5" stroke-linejoin="bevel"/><text x="28" y="8" font-size="9" font-family="Liberation Sans" font-weight="700" fill="#1e9e3e">3</text></svg><div class=t style="left:1652.8px;top:253.6px;font-size:24.40px;font-weight:400;color:#3b3b3f;letter-spacing:0em;font-family:'Liberation Sans';transform:scaleX(1.0395);transform-origin:0 0;">JavaScript Strings</div><svg style="left:1894px;top:252px" width="28" height="28" viewBox="0 0 32 32"><circle cx="16" cy="16" r="14" fill="#3c4043"/><circle cx="16" cy="16" r="6.5" fill="#fff"/><circle cx="16" cy="16" r="4.3" fill="#3c4043"/><path d="M16 9.5 H29 M10.4 19.2 L3.9 8 M21.6 19.2 L15 30.5" stroke="#fff" stroke-width="2.2"/></svg><div class=t style="left:1937.4px;top:253.6px;font-size:24.40px;font-weight:400;color:#3b3b3f;letter-spacing:0em;font-family:'Liberation Sans';transform:scaleX(1.0011);transform-origin:0 0;">New Tab</div><svg style="left:2068px;top:252px" width="28" height="28" viewBox="0 0 32 32"><g transform="scale(1.1428)"><circle cx="14" cy="14" r="12.3" fill="none" stroke="#5f6368" stroke-width="3.3"/><path d="M11.5 3 C15 2.5 22 4 25.5 9 C26.5 12 24.5 15 21.5 15 C19 15 19 12.5 17 12 C14 11.5 10.5 11 11.5 7 Z" fill="#5f6368"/><path d="M1.5 14.5 C5 14 10 14 12.5 16 C14.5 17.5 14 20.5 11.5 21 C10 21.5 9.5 23.5 9 25.5 C5 23.5 2 19.5 1.5 14.5 Z" fill="#5f6368"/></g></svg><div class=t style="left:2110.6px;top:253.6px;font-size:24.40px;font-weight:400;color:#3b3b3f;letter-spacing:0em;font-family:'Liberation Sans';transform:scaleX(0.9753);transform-origin:0 0;">C# AND .NET FRA...</div><svg style="left:2611px;top:255px" width="22" height="20" viewBox="0 0 22 20"><path d="M2 2 L9.5 10 L2 18 M12 2 L19.5 10 L12 18" fill="none" stroke="#474747" stroke-width="2.8"/></svg><div style="left:2666px;top:250px;width:3px;height:31px;border-radius:2px;background:#c2d5f5"></div><svg style="left:2702px;top:252px" width="32" height="27" viewBox="0 0 32 27"><path d="M1.5 1.5 H12 L15 5 H30.5 V25.5 H1.5 Z M1.5 8.5 H30.5" fill="none" stroke="#474747" stroke-width="2.8" stroke-linejoin="round"/></svg><div class=t style="left:2751.0px;top:253.6px;font-size:24.40px;font-weight:400;color:#3b3b3f;letter-spacing:0em;font-family:'Liberation Sans';transform:scaleX(1.0133);transform-origin:0 0;">All Bookmarks</div><div style="left:0;top:307.5px;width:440px;height:1450px;background:#17171b"></div><div style="left:0;top:307.5px;width:2940px;height:1450px;background:#f7f7f7;left:440px;width:2500px"></div><svg style="left:34px;top:338px" width="56" height="56" viewBox="0 0 56 56"><rect width="56" height="56" rx="12" fill="#6a3ee9"/><g fill="#1e90ff"><circle cx="10" cy="5" r="0.9"/><circle cx="13" cy="5" r="0.9"/><circle cx="17" cy="5" r="0.9"/><circle cx="8" cy="8" r="0.9"/><circle cx="12" cy="8" r="0.9"/><circle cx="16" cy="8" r="0.9"/><circle cx="7" cy="11" r="0.9"/><circle cx="11" cy="11" r="0.9"/><circle cx="6" cy="14" r="0.9"/><circle cx="10" cy="14" r="0.9"/><circle cx="4" cy="17" r="0.9"/><circle cx="8" cy="18" r="0.9"/></g><path d="M28 8 A20 20 0 1 1 13 42" fill="none" stroke="#a89cf7" stroke-width="2.6"/><path d="M28 14 A14 14 0 1 1 16 36" fill="none" stroke="#d9c8ff" stroke-width="2.4"/><path d="M28 20 A8 8 0 1 1 21 32" fill="none" stroke="#f1ecff" stroke-width="2.4"/><path d="M27.5 8 V26" stroke="#fff" stroke-width="2.2"/><circle cx="28" cy="27.5" r="3.4" fill="#fff"/><path d="M10.5 26 V39 H22" fill="none" stroke="#fff" stroke-width="2.8"/><path d="M15 28 v3 M19 28 v3" stroke="#e9dcff" stroke-width="1.6"/></svg><div class=t style="left:107px;top:349.5px;font-size:33.6px;font-weight:700;color:#fff;letter-spacing:-0.2px"><span style="color:#8b8cf6">Geo</span>vantax</div><div style="left:0;top:424.5px;width:440px;height:1.5px;background:#2a2a2e"></div><div class=t style="left:32.6px;top:456.1px;font-size:19.29px;font-weight:700;color:#4e4e54;letter-spacing:0.12em;font-family:'Liberation Sans';">ACTIVE WEBSITE</div><div style="left:24.5px;top:492.5px;width:389px;height:66.5px;border-radius:20px;background:#232326;border:2px solid #3c3c41"></div><div class=t style="left:50.7px;top:512.8px;font-size:25.85px;font-weight:400;color:#d8d8dc;letter-spacing:0em;font-family:'Liberation Sans';">aiventry.com</div><svg style="left:378px;top:521px" width="16" height="10" viewBox="0 0 16 10"><path d="M1.5 1.5 L8 8 L14.5 1.5" fill="none" stroke="#75757c" stroke-width="2"/></svg><svg style="left:35px;top:584px" width="18" height="18" viewBox="0 0 18 18"><path d="M9 1 V17 M1 9 H17" stroke="#6b6b71" stroke-width="2"/></svg><div class=t style="left:68.6px;top:581.1px;font-size:23.37px;font-weight:400;color:#6e6e73;letter-spacing:0em;font-family:'Liberation Sans';">Add new website</div><div style="left:0;top:633px;width:440px;height:1.5px;background:#2a2a2e"></div><div style="left:428px;top:635px;width:10px;height:758px;border-radius:5px;background:#cfcfd5"></div><div style="left:0;top:307.5px;width:1.5px;height:1450px;background:#323234"></div><div style="left:16px;top:857px;width:396px;height:60px;border-radius:22px;background:#22253b"></div><div style="left:16px;top:871px;width:6px;height:32px;border-radius:0 3px 3px 0;background:#5f6ae6"></div><svg style="left:40.0px;top:674.0px" width="30" height="30" viewBox="0 0 24 24" fill="none" stroke="#89898e" stroke-width="1.85" stroke-linecap="round" stroke-linejoin="round"><rect x="3" y="3" width="7" height="9" rx="1"/><rect x="14" y="3" width="7" height="5" rx="1"/><rect x="14" y="12" width="7" height="9" rx="1"/><rect x="3" y="16" width="7" height="5" rx="1"/></svg><div class=t style="left:90.7px;top:675.7px;font-size:25.67px;font-weight:400;color:#89898e;letter-spacing:0em;font-family:'Liberation Sans';">Overview</div><svg style="left:40.0px;top:808.5px" width="30" height="30" viewBox="0 0 24 24" fill="none" stroke="#89898e" stroke-width="1.85" stroke-linecap="round" stroke-linejoin="round"><path d="M21 15a2 2 0 0 1-2 2H7l-4 4V5a2 2 0 0 1 2-2h14a2 2 0 0 1 2 2z"/><path d="M7 8h10M7 12h8"/></svg><div class=t style="left:90.7px;top:810.1px;font-size:25.78px;font-weight:400;color:#89898e;letter-spacing:0em;font-family:'Liberation Sans';">Prompt Tracking</div><svg style="left:40.0px;top:872.5px" width="30" height="30" viewBox="0 0 24 24" fill="none" stroke="#5f6ae6" stroke-width="1.85" stroke-linecap="round" stroke-linejoin="round"><path d="M9 17H7A5 5 0 0 1 7 7h2"/><path d="M15 7h2a5 5 0 1 1 0 10h-2"/><line x1="8" x2="16" y1="12" y2="12"/></svg><div class=t style="left:90.7px;top:874.2px;font-size:25.70px;font-weight:500;color:#ffffff;letter-spacing:0em;font-family:'Liberation Sans';">Citations</div><svg style="left:40.0px;top:936.1px" width="30" height="30" viewBox="0 0 24 24" fill="none" stroke="#89898e" stroke-width="1.85" stroke-linecap="round" stroke-linejoin="round"><path d="M22 12h-4l-3 9L9 3l-3 9H2"/></svg><div class=t style="left:90.7px;top:937.4px;font-size:26.15px;font-weight:400;color:#89898e;letter-spacing:0em;font-family:'Liberation Sans';">Monitor</div><svg style="left:40.0px;top:1070.5px" width="30" height="30" viewBox="0 0 24 24" fill="none" stroke="#89898e" stroke-width="1.85" stroke-linecap="round" stroke-linejoin="round"><circle cx="11" cy="11" r="8"/><path d="m21 21-4.3-4.3"/></svg><div class=t style="left:90.7px;top:1072.0px;font-size:25.85px;font-weight:400;color:#89898e;letter-spacing:0em;font-family:'Liberation Sans';">AI Audit</div><svg style="left:40.0px;top:1134.5px" width="30" height="30" viewBox="0 0 24 24" fill="none" stroke="#89898e" stroke-width="1.85" stroke-linecap="round" stroke-linejoin="round"><circle cx="12" cy="12" r="10"/><path d="M12 2a14.5 14.5 0 0 0 0 20 14.5 14.5 0 0 0 0-20"/><path d="M2 12h20"/></svg><div class=t style="left:90.7px;top:1137.1px;font-size:24.62px;font-weight:400;color:#89898e;letter-spacing:0em;font-family:'Liberation Sans';">GEO Audit</div><svg style="left:40.0px;top:1198.5px" width="30" height="30" viewBox="0 0 24 24" fill="none" stroke="#89898e" stroke-width="1.85" stroke-linecap="round" stroke-linejoin="round"><path d="M16 21v-2a4 4 0 0 0-4-4H6a4 4 0 0 0-4 4v2"/><circle cx="9" cy="7" r="4"/><path d="M22 21v-2a4 4 0 0 0-3-3.87"/><path d="M16 3.13a4 4 0 0 1 0 7.75"/></svg><div class=t style="left:90.7px;top:1200.0px;font-size:25.88px;font-weight:400;color:#89898e;letter-spacing:0em;font-family:'Liberation Sans';">Competitors</div><svg style="left:40.0px;top:1262.5px" width="30" height="30" viewBox="0 0 24 24" fill="none" stroke="#89898e" stroke-width="1.85" stroke-linecap="round" stroke-linejoin="round"><path d="M15 14c.2-1 .7-1.7 1.5-2.5 1-.9 1.5-2.2 1.5-3.5A6 6 0 0 0 6 8c0 1 .2 2.2 1.5 3.5.7.7 1.3 1.5 1.5 2.5"/><path d="M9 18h6"/><path d="M10 22h4"/></svg><div class=t style="left:90.7px;top:1264.1px;font-size:25.80px;font-weight:400;color:#89898e;letter-spacing:0em;font-family:'Liberation Sans';">Query Discovery</div><svg style="left:40.0px;top:1397.1px" width="30" height="30" viewBox="0 0 24 24" fill="none" stroke="#89898e" stroke-width="1.85" stroke-linecap="round" stroke-linejoin="round"><path d="M4 14a1 1 0 0 1-.78-1.63l9.9-10.2a.5.5 0 0 1 .86.46l-1.92 6.02A1 1 0 0 0 13 10h7a1 1 0 0 1 .78 1.63l-9.9 10.2a.5.5 0 0 1-.86-.46l1.92-6.02A1 1 0 0 0 11 14z"/></svg><div class=t style="left:90.7px;top:1399.0px;font-size:25.36px;font-weight:400;color:#89898e;letter-spacing:0em;font-family:'Liberation Sans';">Action Plan</div><svg style="left:40.0px;top:1460.5px" width="30" height="30" viewBox="0 0 24 24" fill="none" stroke="#89898e" stroke-width="1.85" stroke-linecap="round" stroke-linejoin="round"><path d="M9.94 15.5A2 2 0 0 0 8.5 14.06l-6.13-1.58a.5.5 0 0 1 0-.96L8.5 9.94A2 2 0 0 0 9.94 8.5l1.58-6.13a.5.5 0 0 1 .96 0L14.06 8.5A2 2 0 0 0 15.5 9.94l6.13 1.58a.5.5 0 0 1 0 .96L15.5 14.06a2 2 0 0 0-1.44 1.44l-1.58 6.13a.5.5 0 0 1-.96 0z"/><path d="M20 3v4M22 5h-4"/><circle cx="4" cy="20" r="2"/></svg><div class=t style="left:90.7px;top:1462.1px;font-size:25.72px;font-weight:400;color:#89898e;letter-spacing:0em;font-family:'Liberation Sans';">Content Optimizer</div><svg style="left:40.0px;top:1524.5px" width="30" height="30" viewBox="0 0 24 24" fill="none" stroke="#89898e" stroke-width="1.85" stroke-linecap="round" stroke-linejoin="round"><path d="M15.7 21.3a1 1 0 0 1-1.4 0l-1.3-1.3a1 1 0 0 1 0-1.4l5.6-5.6a1 1 0 0 1 1.4 0l1.3 1.3a1 1 0 0 1 0 1.4z"/><path d="m18 13-1.4-6.9a1 1 0 0 0-.8-.8L2.3 2.1a1 1 0 0 0-1.2 1.2l3.2 13.5a1 1 0 0 0 .8.8L12 19"/><path d="M2.3 2.3 9.6 9.6"/><circle cx="11" cy="11" r="2"/></svg><div class=t style="left:90.7px;top:1526.2px;font-size:25.62px;font-weight:400;color:#89898e;letter-spacing:0em;font-family:'Liberation Sans';">Content Studio</div><svg style="left:40.0px;top:1588.5px" width="30" height="30" viewBox="0 0 24 24" fill="none" stroke="#89898e" stroke-width="1.85" stroke-linecap="round" stroke-linejoin="round"><rect width="20" height="16" x="2" y="4" rx="2"/><path d="m22 7-8.97 5.7a1.94 1.94 0 0 1-2.06 0L2 7"/></svg><div class=t style="left:90.7px;top:1590.3px;font-size:25.50px;font-weight:400;color:#89898e;letter-spacing:0em;font-family:'Liberation Sans';">Outreach</div><svg style="left:40.0px;top:1687.1px" width="30" height="30" viewBox="0 0 24 24" fill="none" stroke="#89898e" stroke-width="1.85" stroke-linecap="round" stroke-linejoin="round"><rect width="20" height="14" x="2" y="5" rx="2"/><line x1="2" x2="22" y1="10" y2="10"/></svg><div class=t style="left:90.7px;top:1689.0px;font-size:25.38px;font-weight:400;color:#89898e;letter-spacing:0em;font-family:'Liberation Sans';">Billing</div><div class=t style="left:40.7px;top:760.8px;font-size:19.27px;font-weight:700;color:#4e4e54;letter-spacing:0.12em;font-family:'Liberation Sans';">TRACK</div><div class=t style="left:40.7px;top:1022.2px;font-size:19.77px;font-weight:700;color:#4e4e54;letter-spacing:0.12em;font-family:'Liberation Sans';">ANALYZE</div><div class=t style="left:40.7px;top:1348.1px;font-size:19.88px;font-weight:700;color:#4e4e54;letter-spacing:0.12em;font-family:'Liberation Sans';">OPTIMIZE</div><div style="left:0;top:1646.5px;width:440px;height:1.5px;background:#2a2a2e"></div><svg style="left:504.2px;top:382.7px" width="47.6" height="47.6" viewBox="0 0 24 24" fill="none" stroke="#5f6ae6" stroke-width="2.2" stroke-linecap="round" stroke-linejoin="round"><path d="M9 17H7A5 5 0 0 1 7 7h2"/><path d="M15 7h2a5 5 0 1 1 0 10h-2"/><line x1="8" x2="16" y1="12" y2="12"/></svg><div class=t style="left:569.3px;top:387.1px;font-size:38.72px;font-weight:700;color:#18181b;letter-spacing:0em;font-family:'Liberation Sans';transform:scaleX(0.9615);transform-origin:0 0;">Citations Analysis</div><div class=t style="left:505.0px;top:443.1px;font-size:27.71px;font-weight:400;color:#a1a1aa;letter-spacing:0em;font-family:'Liberation Sans';">Understand which domains AI search engines cite for your prompts</div><div style="left:2617px;top:380px;width:247.5px;height:84px;border-radius:14px;background:#fff;border:2px solid #e4e4e7;box-shadow:0 1px 3px rgba(0,0,0,0.06)"></div><div class=t style="left:2642.0px;top:412.7px;font-size:27.44px;font-weight:400;color:#18181b;letter-spacing:0em;font-family:'Liberation Sans';">Last 30 days</div><div style="left:440px;top:307.5px;width:2500px;height:95px;background:#f7f7f7"></div><div style="left:440px;top:401.5px;width:2500px;height:2px;background:#dddde1"></div><div style="left:488px;top:327px;width:254px;height:55.5px;border-radius:22px;background:#6068d5;box-shadow:0 2px 5px rgba(96,104,213,0.25)"></div><svg style="left:523px;top:344px" width="22" height="22" viewBox="0 0 22 22"><path d="M11 1.5 V20.5 M1.5 11 H20.5" stroke="#fff" stroke-width="2.6"/></svg><div class=t style="left:565.0px;top:342.5px;font-size:24.89px;font-weight:700;color:#fff;letter-spacing:0em;font-family:'Liberation Sans';transform:scaleX(0.9615);transform-origin:0 0;">Add Website</div><div style="left:2432px;top:331.5px;width:47px;height:47px;border-radius:50%;background:#5b60d5"></div><div class=t style="left:2455.5px;transform:translateX(-50%);top:343.8px;font-size:22.00px;font-weight:700;color:#fff;letter-spacing:0em;font-family:'Liberation Sans';">S</div><div class=t style="left:2496.7px;top:340.9px;font-size:28.06px;font-weight:400;color:#4d4d55;letter-spacing:0em;font-family:'Liberation Sans';">swapnila302@gmail.com</div><div style="left:2834px;top:339px;width:2px;height:32px;background:#dedee2"></div><svg style="left:2859px;top:339px" width="32" height="32" viewBox="0 0 24 24" fill="none" stroke="#a1a1aa" stroke-width="2" stroke-linecap="round" stroke-linejoin="round"><path d="M9 21H5a2 2 0 0 1-2-2V5a2 2 0 0 1 2-2h4"/><polyline points="16 17 21 12 16 7"/><line x1="21" x2="9" y1="12" y2="12"/></svg><div style="left:2930px;top:426px;width:10px;height:332px;border-radius:5px;background:#d1d1d6"></div><div style="left:504.5px;top:525px;width:2361px;height:175px;border-radius:28px;background:#eeeef6;border:2px solid #dadaf2"></div><svg style="left:537.8px;top:555.0px" width="32" height="32" viewBox="0 0 24 24" fill="none" stroke="#5f6ae6" stroke-width="2.2" stroke-linecap="round" stroke-linejoin="round"><path d="M9 17H7A5 5 0 0 1 7 7h2"/><path d="M15 7h2a5 5 0 1 1 0 10h-2"/><line x1="8" x2="16" y1="12" y2="12"/></svg><div class=t style="left:594.5px;top:557.1px;font-size:27.47px;color:#52525a;font-family:'Liberation Sans';"><span style="font-weight:700;color:#45454c">Citations</span><span style="font-weight:400;"> are the source links AI search engines (ChatGPT, Perplexity, Google AIO) use to back up their answers. When your domain appears as a citation, AI is endorsing your content</span></div><div class=t style="left:594.5px;top:597.5px;font-size:27.68px;color:#52525a;font-family:'Liberation Sans';"><span style="font-weight:400;">as authoritative. A high </span><span style="font-weight:700;color:#45454c">citation gap %</span><span style="font-weight:400;"> means competitors are being cited for your target topics — and you're not.</span></div><div class=t style="left:594.5px;top:646.1px;font-size:25.74px;font-weight:400;color:#a1a1aa;letter-spacing:0em;font-family:'Liberation Sans';">Tip: Use Content Gaps below to find specific topics where you can win citations back from competitors.</div><div style="left:505px;top:749.5px;width:564px;height:215px;border-radius:28px;background:#fff;border:2px solid #e7e7ea;box-shadow:0 1px 3px rgba(0,0,0,0.05)"></div><div style="left:1103.5px;top:749.5px;width:564px;height:215px;border-radius:28px;background:#fff;border:2px solid #e7e7ea;box-shadow:0 1px 3px rgba(0,0,0,0.05)"></div><div style="left:1702.5px;top:749.5px;width:564px;height:215px;border-radius:28px;background:#fff;border:2px solid #e7e7ea;box-shadow:0 1px 3px rgba(0,0,0,0.05)"></div><div style="left:2301px;top:749.5px;width:564px;height:215px;border-radius:28px;background:#fff;border:2px solid #e7e7ea;box-shadow:0 1px 3px rgba(0,0,0,0.05)"></div><div class=t style="left:546.5px;top:792.1px;font-size:23.10px;font-weight:700;color:#a1a1aa;letter-spacing:0.1em;font-family:'Liberation Sans';transform:scaleX(0.9434);transform-origin:0 0;">PROMPTS CHECKED</div><div class=t style="left:545.0px;top:835.8px;font-size:48.50px;font-weight:700;color:#18181b;letter-spacing:0em;font-family:'Liberation Sans';transform:scaleX(1.13);transform-origin:0 0">3</div><div class=t style="left:546.5px;top:898.7px;font-size:25.73px;font-weight:400;color:#a1a1aa;letter-spacing:0em;font-family:'Liberation Sans';">tracked prompts</div><div class=t style="left:1144.5px;top:791.9px;font-size:23.24px;font-weight:700;color:#a1a1aa;letter-spacing:0.1em;font-family:'Liberation Sans';transform:scaleX(0.9434);transform-origin:0 0;">WE'RE CITED</div><div class=t style="left:1143.0px;top:835.8px;font-size:48.50px;font-weight:700;color:#16a34a;letter-spacing:0em;font-family:'Liberation Sans';transform:scaleX(1.13);transform-origin:0 0">0</div><div class=t style="left:1144.5px;top:898.5px;font-size:26.03px;font-weight:400;color:#a1a1aa;letter-spacing:0em;font-family:'Liberation Sans';">of 3 prompts</div><div class=t style="left:1744.0px;top:791.9px;font-size:23.24px;font-weight:700;color:#a1a1aa;letter-spacing:0.1em;font-family:'Liberation Sans';transform:scaleX(0.9434);transform-origin:0 0;">CITATION GAP</div><div class=t style="left:1742.5px;top:835.8px;font-size:48.50px;font-weight:700;color:#dc2626;letter-spacing:0em;font-family:'Liberation Sans';transform:scaleX(1.13);transform-origin:0 0">100%</div><div class=t style="left:1744.0px;top:898.9px;font-size:25.51px;font-weight:400;color:#a1a1aa;letter-spacing:0em;font-family:'Liberation Sans';">3 prompts missing us</div><div class=t style="left:2342.0px;top:791.6px;font-size:23.60px;font-weight:700;color:#a1a1aa;letter-spacing:0.1em;font-family:'Liberation Sans';transform:scaleX(0.9434);transform-origin:0 0;">COMPETING DOMAINS</div><div class=t style="left:2340.5px;top:835.8px;font-size:48.50px;font-weight:700;color:#18181b;letter-spacing:0em;font-family:'Liberation Sans';transform:scaleX(1.13);transform-origin:0 0">13</div><div class=t style="left:2342.0px;top:898.8px;font-size:25.68px;font-weight:400;color:#a1a1aa;letter-spacing:0em;font-family:'Liberation Sans';">cited instead of you</div><div style="left:1941px;top:791.1px;width:27px;height:27px;border-radius:50%;background:#f4f4f5;border:2px solid #e2e2e6"></div><div style="left:1953.4px;top:801.1px;width:2.2px;height:10.5px;background:#a6a6ae"></div><div style="left:1953.3px;top:796.8000000000001px;width:2.4px;height:2.6px;border-radius:1px;background:#a6a6ae"></div><div style="left:505px;top:1015px;width:1155px;height:690.5px;border-radius:28px;background:#fff;border:2px solid #e7e7ea;box-shadow:0 1px 3px rgba(0,0,0,0.05)"></div><div style="left:507px;top:1111.5px;width:1151px;height:2px;background:#e7e7ea"></div><div style="left:1711px;top:1015px;width:1153.5px;height:690.5px;border-radius:28px;background:#fff;border:2px solid #e7e7ea;box-shadow:0 1px 3px rgba(0,0,0,0.05)"></div><div style="left:1713px;top:1111.5px;width:1149.5px;height:2px;background:#e7e7ea"></div><div class=t style="left:547.0px;top:1050.3px;font-size:27.09px;font-weight:700;color:#18181b;letter-spacing:0em;font-family:'Liberation Sans';transform:scaleX(0.9615);transform-origin:0 0;">Top Cited Domains</div><div style="left:799px;top:1052.5px;width:27px;height:27px;border-radius:50%;background:#f4f4f5;border:2px solid #e2e2e6"></div><div style="left:811.4px;top:1062.5px;width:2.2px;height:10.5px;background:#a6a6ae"></div><div style="left:811.3px;top:1058.2px;width:2.4px;height:2.6px;border-radius:1px;background:#a6a6ae"></div><div class=t style="left:1751.5px;top:1050.6px;font-size:27.11px;font-weight:700;color:#18181b;letter-spacing:0em;font-family:'Liberation Sans';transform:scaleX(0.9615);transform-origin:0 0;">Domain Citation Spread</div><div style="left:2063.4px;top:1052.5px;width:27px;height:27px;border-radius:50%;background:#f4f4f5;border:2px solid #e2e2e6"></div><div style="left:2075.8px;top:1062.5px;width:2.2px;height:10.5px;background:#a6a6ae"></div><div style="left:2075.7000000000003px;top:1058.2px;width:2.4px;height:2.6px;border-radius:1px;background:#a6a6ae"></div><svg style="left:0;top:0" width="2940" height="1912"><line x1="865.6" y1="1153.8" x2="865.6" y2="1603" stroke="#e4e4e7" stroke-width="2" stroke-dasharray="6 6"/><line x1="1046.1" y1="1153.8" x2="1046.1" y2="1603" stroke="#e4e4e7" stroke-width="2" stroke-dasharray="6 6"/><line x1="1226.6" y1="1153.8" x2="1226.6" y2="1603" stroke="#e4e4e7" stroke-width="2" stroke-dasharray="6 6"/><line x1="1407.1" y1="1153.8" x2="1407.1" y2="1603" stroke="#e4e4e7" stroke-width="2" stroke-dasharray="6 6"/><line x1="1587.6" y1="1153.8" x2="1587.6" y2="1603" stroke="#e4e4e7" stroke-width="2" stroke-dasharray="6 6"/><path d="M865.6 1163.0 H1579.6 Q1587.6 1163.0 1587.6 1171.0 V1182.8 Q1587.6 1190.8 1579.6 1190.8 H865.6 Z" fill="#6068d4"/><path d="M865.6 1208.1 H1218.6 Q1226.6 1208.1 1226.6 1216.1 V1227.9 Q1226.6 1235.9 1218.6 1235.9 H865.6 Z" fill="#6068d4"/><path d="M865.6 1253.1 H1218.6 Q1226.6 1253.1 1226.6 1261.1 V1272.9 Q1226.6 1280.9 1218.6 1280.9 H865.6 Z" fill="#6068d4"/><path d="M865.6 1298.2 H1218.6 Q1226.6 1298.2 1226.6 1306.2 V1318.0 Q1226.6 1326.0 1218.6 1326.0 H865.6 Z" fill="#6068d4"/><path d="M865.6 1343.3 H1218.6 Q1226.6 1343.3 1226.6 1351.3 V1363.1 Q1226.6 1371.1 1218.6 1371.1 H865.6 Z" fill="#6068d4"/><path d="M865.6 1388.3 H1218.6 Q1226.6 1388.3 1226.6 1396.3 V1408.1 Q1226.6 1416.1 1218.6 1416.1 H865.6 Z" fill="#6068d4"/><path d="M865.6 1433.4 H1218.6 Q1226.6 1433.4 1226.6 1441.4 V1453.2 Q1226.6 1461.2 1218.6 1461.2 H865.6 Z" fill="#6068d4"/><path d="M865.6 1478.5 H1218.6 Q1226.6 1478.5 1226.6 1486.5 V1498.3 Q1226.6 1506.3 1218.6 1506.3 H865.6 Z" fill="#6068d4"/><path d="M865.6 1523.6 H1218.6 Q1226.6 1523.6 1226.6 1531.6 V1543.4 Q1226.6 1551.4 1218.6 1551.4 H865.6 Z" fill="#6068d4"/><path d="M865.6 1568.6 H1218.6 Q1226.6 1568.6 1226.6 1576.6 V1588.4 Q1226.6 1596.4 1218.6 1596.4 H865.6 Z" fill="#6068d4"/></svg><div class=t style="right:2091.0px;top:1166.2px;font-size:23.50px;font-weight:400;color:#52525b;letter-spacing:0em;font-family:'Liberation Sans';">wati.io</div><div class=t style="right:2091.0px;top:1211.3px;font-size:23.50px;font-weight:400;color:#52525b;letter-spacing:0em;font-family:'Liberation Sans';">zillow.com</div><div class=t style="right:2091.0px;top:1256.4px;font-size:23.50px;font-weight:400;color:#52525b;letter-spacing:0em;font-family:'Liberation Sans';">realtor.com</div><div class=t style="right:2091.0px;top:1301.4px;font-size:23.50px;font-weight:400;color:#52525b;letter-spacing:0em;font-family:'Liberation Sans';">boldleads.com</div><div class=t style="right:2091.0px;top:1346.5px;font-size:23.50px;font-weight:400;color:#52525b;letter-spacing:0em;font-family:'Liberation Sans';">marketleader.com</div><div class=t style="right:2091.0px;top:1391.6px;font-size:23.50px;font-weight:400;color:#52525b;letter-spacing:0em;font-family:'Liberation Sans';">opendoor.com</div><div class=t style="right:2091.0px;top:1436.6px;font-size:23.50px;font-weight:400;color:#52525b;letter-spacing:0em;font-family:'Liberation Sans';">zoko.io</div><div class=t style="right:2091.0px;top:1481.7px;font-size:23.50px;font-weight:400;color:#52525b;letter-spacing:0em;font-family:'Liberation Sans';">whatsapp.com</div><div class=t style="right:2091.0px;top:1526.8px;font-size:23.50px;font-weight:400;color:#52525b;letter-spacing:0em;font-family:'Liberation Sans';">gupshup.io</div><div class=t style="right:2091.0px;top:1571.9px;font-size:23.50px;font-weight:400;color:#52525b;letter-spacing:0em;font-family:'Liberation Sans';">chatbot.com</div><div class=t style="left:865.6px;transform:translateX(-50%);top:1618.5px;font-size:23.00px;font-weight:400;color:#a1a1aa;letter-spacing:0em;font-family:'Liberation Sans';">0</div><div class=t style="left:1046.1px;transform:translateX(-50%);top:1618.5px;font-size:23.00px;font-weight:400;color:#a1a1aa;letter-spacing:0em;font-family:'Liberation Sans';">0.5</div><div class=t style="left:1226.6px;transform:translateX(-50%);top:1618.5px;font-size:23.00px;font-weight:400;color:#a1a1aa;letter-spacing:0em;font-family:'Liberation Sans';">1</div><div class=t style="left:1407.1px;transform:translateX(-50%);top:1618.5px;font-size:23.00px;font-weight:400;color:#a1a1aa;letter-spacing:0em;font-family:'Liberation Sans';">1.5</div><div class=t style="left:1587.6px;transform:translateX(-50%);top:1618.5px;font-size:23.00px;font-weight:400;color:#a1a1aa;letter-spacing:0em;font-family:'Liberation Sans';">2</div><svg style="left:0;top:0" width="2940" height="1912"><line x1="1890.6" y1="1585.9" x2="2804.6" y2="1585.9" stroke="#e4e4e7" stroke-width="2" stroke-dasharray="6 6"/><line x1="1890.6" y1="1173.8" x2="1890.6" y2="1585.9" stroke="#e4e4e7" stroke-width="2" stroke-dasharray="6 6"/><line x1="1890.6" y1="1482.9" x2="2804.6" y2="1482.9" stroke="#e4e4e7" stroke-width="2" stroke-dasharray="6 6"/><line x1="2119.1" y1="1173.8" x2="2119.1" y2="1585.9" stroke="#e4e4e7" stroke-width="2" stroke-dasharray="6 6"/><line x1="1890.6" y1="1379.9" x2="2804.6" y2="1379.9" stroke="#e4e4e7" stroke-width="2" stroke-dasharray="6 6"/><line x1="2347.6" y1="1173.8" x2="2347.6" y2="1585.9" stroke="#e4e4e7" stroke-width="2" stroke-dasharray="6 6"/><line x1="1890.6" y1="1276.8" x2="2804.6" y2="1276.8" stroke="#e4e4e7" stroke-width="2" stroke-dasharray="6 6"/><line x1="2576.1" y1="1173.8" x2="2576.1" y2="1585.9" stroke="#e4e4e7" stroke-width="2" stroke-dasharray="6 6"/><line x1="1890.6" y1="1173.8" x2="2804.6" y2="1173.8" stroke="#e4e4e7" stroke-width="2" stroke-dasharray="6 6"/><line x1="2804.6" y1="1173.8" x2="2804.6" y2="1585.9" stroke="#e4e4e7" stroke-width="2" stroke-dasharray="6 6"/><circle cx="2347.6" cy="1379.9" r="16.5" fill="#8966df"/><defs><clipPath id="pc"><rect x="1870.6" y="1153" width="953.5" height="460"/></clipPath></defs><circle cx="2804.6" cy="1173.8" r="21" fill="#8592e2" fill-opacity="0.95" clip-path="url(#pc)"/></svg><div class=t style="right:1066.5px;top:1574.4px;font-size:23.00px;font-weight:400;color:#a1a1aa;letter-spacing:0em;font-family:'Liberation Sans';">0</div><div class=t style="left:1890.6px;transform:translateX(-50%);top:1597.9px;font-size:23.00px;font-weight:400;color:#a1a1aa;letter-spacing:0em;font-family:'Liberation Sans';">0</div><div class=t style="right:1066.5px;top:1471.3px;font-size:23.00px;font-weight:400;color:#a1a1aa;letter-spacing:0em;font-family:'Liberation Sans';">0.5</div><div class=t style="left:2119.1px;transform:translateX(-50%);top:1597.9px;font-size:23.00px;font-weight:400;color:#a1a1aa;letter-spacing:0em;font-family:'Liberation Sans';">0.5</div><div class=t style="right:1066.5px;top:1368.3px;font-size:23.00px;font-weight:400;color:#a1a1aa;letter-spacing:0em;font-family:'Liberation Sans';">1</div><div class=t style="left:2347.6px;transform:translateX(-50%);top:1597.9px;font-size:23.00px;font-weight:400;color:#a1a1aa;letter-spacing:0em;font-family:'Liberation Sans';">1</div><div class=t style="right:1066.5px;top:1265.3px;font-size:23.00px;font-weight:400;color:#a1a1aa;letter-spacing:0em;font-family:'Liberation Sans';">1.5</div><div class=t style="left:2576.1px;transform:translateX(-50%);top:1597.9px;font-size:23.00px;font-weight:400;color:#a1a1aa;letter-spacing:0em;font-family:'Liberation Sans';">1.5</div><div class=t style="right:1066.5px;top:1162.3px;font-size:23.00px;font-weight:400;color:#a1a1aa;letter-spacing:0em;font-family:'Liberation Sans';">2</div><div class=t style="left:2804.6px;transform:translateX(-50%);top:1597.9px;font-size:23.00px;font-weight:400;color:#a1a1aa;letter-spacing:0em;font-family:'Liberation Sans';">2</div><div class=t style="left:1780px;top:1338.8px;font-size:22px;color:#a1a1aa;transform:translate(-50%,-50%) rotate(-90deg)">Citations</div><div style="left:2200px;top:1650px;width:300px;height:16.5px;overflow:hidden"><div class=t style="left:150px;top:1.5px;font-size:23px;color:#a1a1aa;transform:translateX(-50%)">Unique Prompts</div></div></div><div style="left:0;top:1755px;width:2940px;height:110px;background:linear-gradient(180deg,#16495a 0px,#1a5466 18px,#1d6a82 40px,#1f86a6 70px,rgba(34,167,203,0) 110px)"></div><div style="left:100px;top:1756px;width:2760px;height:4px;background:#0a1215"></div><div style="left:69px;top:1773.5px;width:2802px;height:127.5px;border-radius:40px;background:linear-gradient(180deg,#42a6c5,#3ea3c3);box-shadow:inset 0 0 0 1.5px rgba(110,215,240,0.75),inset 0 0 24px rgba(120,210,235,0.25)"></div><svg style="left:96.6px;top:1802px" width="71" height="71" viewBox="0 0 100 100"><defs><clipPath id="dc1"><rect width="100" height="100" rx="23"/></clipPath></defs><g clip-path="url(#dc1)"><defs><linearGradient id="fd1" x1="0" y1="0" x2="0" y2="1"><stop offset="0" stop-color="#1cc0fb"/><stop offset="1" stop-color="#1466f0"/></linearGradient></defs><defs><linearGradient id="fd2" x1="0" y1="0" x2="0" y2="1"><stop offset="0" stop-color="#f4f8fd"/><stop offset="1" stop-color="#8fc0f5"/></linearGradient></defs><rect x="0" y="0" width="100" height="100" rx="23" fill="url(#fd1)"/><path d="M57 0 H77 A23 23 0 0 1 100 23 V77 A23 23 0 0 1 77 100 H57 C53 80 53 72 56 62 H44 C46 40 50 20 57 0Z" fill="url(#fd2)"/><path d="M20 68 Q50 88 82 68" fill="none" stroke="#1b2a3a" stroke-width="3"/><path d="M30 32 v9 M70 32 v9" stroke="#1b2a3a" stroke-width="3.5"/></g></svg><svg style="left:192.4px;top:1802px" width="71" height="71" viewBox="0 0 100 100"><defs><clipPath id="dc2"><rect width="100" height="100" rx="23"/></clipPath></defs><g clip-path="url(#dc2)"><defs><linearGradient id="lp" x1="0" y1="0" x2="0" y2="1"><stop offset="0" stop-color="#ffffff"/><stop offset="1" stop-color="#e9e9ee"/></linearGradient></defs><rect x="0" y="0" width="100" height="100" rx="23" fill="url(#lp)"/><rect x="15" y="20" width="70" height="16" rx="8" fill="#a9a9ad"/><circle cx="24" cy="28" r="4" fill="none" stroke="#fff" stroke-width="2"/><rect x="18" y="47" width="14" height="14" rx="4" fill="#ff9f1c"/><rect x="43" y="47" width="14" height="14" rx="4" fill="#ff4fa3"/><rect x="68" y="47" width="14" height="14" rx="4" fill="#30b37a"/><rect x="18" y="70" width="14" height="14" rx="4" fill="#c58bf7"/><rect x="43" y="70" width="14" height="14" rx="4" fill="#4db6ff"/><rect x="68" y="70" width="14" height="14" rx="4" fill="#a5a5aa"/></g></svg><svg style="left:288.5px;top:1802px" width="71" height="71" viewBox="0 0 100 100"><defs><clipPath id="dc3"><rect width="100" height="100" rx="23"/></clipPath></defs><g clip-path="url(#dc3)"><rect x="0" y="0" width="100" height="100" rx="23" fill="#f2f3f5"/><circle cx="50" cy="50" r="40" fill="#1b85f5"/><circle cx="50" cy="50" r="34" fill="none" stroke="#9fd0ff" stroke-width="3" stroke-dasharray="1.5 3"/><path d="M72 28 L54 54 L46 46Z" fill="#ff3b30"/><path d="M28 72 L46 46 L54 54Z" fill="#fff"/></g></svg><svg style="left:384.5px;top:1802px" width="71" height="71" viewBox="0 0 100 100"><defs><clipPath id="dc4"><rect width="100" height="100" rx="23"/></clipPath></defs><g clip-path="url(#dc4)"><rect x="0" y="0" width="100" height="100" rx="23" fill="#f7f7f8"/><g transform="translate(50 50)"><circle r="38" fill="#db4437"/><path d="M0 0 L33 19 A38 38 0 0 1 -33 19Z" fill="#0f9d58"/><path d="M0 0 L33 19 A38 38 0 0 0 0 -38Z" fill="#ffcd40"/><path d="M0 -38 A38 38 0 0 0 -33 19 L0 0Z" fill="#db4437"/><circle r="17" fill="#fff"/><circle r="13.5" fill="#1a73e8"/></g></g></svg><svg style="left:480.7px;top:1802px" width="71" height="71" viewBox="0 0 100 100"><defs><clipPath id="dc5"><rect width="100" height="100" rx="23"/></clipPath></defs><g clip-path="url(#dc5)"><defs><linearGradient id="ms" x1="0" y1="0" x2="0" y2="1"><stop offset="0" stop-color="#6ee86a"/><stop offset="1" stop-color="#22b83a"/></linearGradient></defs><rect x="0" y="0" width="100" height="100" rx="23" fill="url(#ms)"/><ellipse cx="50" cy="48" rx="35" ry="28" fill="#eefaee"/><path d="M24 66 L18 82 L38 72Z" fill="#eefaee"/></g></svg><div style="left:519px;top:1790px;width:40px;height:40px;border-radius:20px;background:#f33d30"></div><div class=t style="left:539.0px;transform:translateX(-50%);top:1800.2px;font-size:21.00px;font-weight:400;color:#fff;letter-spacing:0em;font-family:'Liberation Sans';">133</div><svg style="left:577.0px;top:1802px" width="71" height="71" viewBox="0 0 100 100"><defs><clipPath id="dc6"><rect width="100" height="100" rx="23"/></clipPath></defs><g clip-path="url(#dc6)"><defs><linearGradient id="ml" x1="0" y1="0" x2="0" y2="1"><stop offset="0" stop-color="#5fc2ff"/><stop offset="1" stop-color="#1a6cf0"/></linearGradient></defs><rect x="0" y="0" width="100" height="100" rx="23" fill="url(#ml)"/><rect x="14" y="28" width="72" height="46" rx="5" fill="#e9f2fd"/><path d="M15 30 L50 57 L85 30" fill="none" stroke="#a8c8f0" stroke-width="3"/></g></svg><svg style="left:672.7px;top:1802px" width="71" height="71" viewBox="0 0 100 100"><defs><clipPath id="dc7"><rect width="100" height="100" rx="23"/></clipPath></defs><g clip-path="url(#dc7)"><rect x="0" y="0" width="100" height="100" rx="23" fill="#5fd65f"/><path d="M0 30 L100 90 V100 H0Z" fill="#f2f2f2"/><path d="M0 40 L60 100 H0Z" fill="#f77ac0"/><path d="M55 72 L100 100 H50Z" fill="#f8c932"/><path d="M0 18 L30 35 L100 82 V100 L0 38Z" fill="#f4f4f4"/><rect x="30" y="0" width="22" height="100" fill="#f4f4f4"/><rect x="34" y="0" width="14" height="60" fill="#2d86f0"/><circle cx="85" cy="18" r="22" fill="none" stroke="#9ce89c" stroke-width="5" opacity="0.7"/><circle cx="42" cy="67" r="23" fill="#fff"/><circle cx="42" cy="67" r="19" fill="#2f8af5"/><path d="M42 52 L51 77 L42 71 L33 77Z" fill="#fff"/></g></svg><svg style="left:768.5px;top:1802px" width="71" height="71" viewBox="0 0 100 100"><defs><clipPath id="dc8"><rect width="100" height="100" rx="23"/></clipPath></defs><g clip-path="url(#dc8)"><rect x="0" y="0" width="100" height="100" rx="23" fill="#f9f9fa"/><g transform="translate(50 50)"><ellipse cx="0" cy="-20" rx="11" ry="19" fill="#f7931e" opacity="0.88" transform="rotate(0)"/><ellipse cx="0" cy="-20" rx="11" ry="19" fill="#fcc419" opacity="0.88" transform="rotate(45)"/><ellipse cx="0" cy="-20" rx="11" ry="19" fill="#8cb83c" opacity="0.88" transform="rotate(90)"/><ellipse cx="0" cy="-20" rx="11" ry="19" fill="#3ea06a" opacity="0.88" transform="rotate(135)"/><ellipse cx="0" cy="-20" rx="11" ry="19" fill="#3d7fe0" opacity="0.88" transform="rotate(180)"/><ellipse cx="0" cy="-20" rx="11" ry="19" fill="#8a5cd6" opacity="0.88" transform="rotate(225)"/><ellipse cx="0" cy="-20" rx="11" ry="19" fill="#f060b0" opacity="0.88" transform="rotate(270)"/><ellipse cx="0" cy="-20" rx="11" ry="19" fill="#f05050" opacity="0.88" transform="rotate(315)"/><circle r="5" fill="#fff"/></g></g></svg><svg style="left:864.7px;top:1802px" width="71" height="71" viewBox="0 0 100 100"><defs><clipPath id="dc9"><rect width="100" height="100" rx="23"/></clipPath></defs><g clip-path="url(#dc9)"><defs><linearGradient id="ft" x1="0" y1="0" x2="0" y2="1"><stop offset="0" stop-color="#6ee86a"/><stop offset="1" stop-color="#22b83a"/></linearGradient></defs><rect x="0" y="0" width="100" height="100" rx="23" fill="url(#ft)"/><rect x="16" y="32" width="46" height="36" rx="8" fill="#f2fbf2"/><path d="M64 46 L84 33 V67 L64 54Z" fill="#f2fbf2"/></g></svg><svg style="left:960.9px;top:1802px" width="71" height="71" viewBox="0 0 100 100"><defs><clipPath id="dc10"><rect width="100" height="100" rx="23"/></clipPath></defs><g clip-path="url(#dc10)"><rect x="0" y="0" width="100" height="100" rx="23" fill="#fbfbfb"/><text x="50" y="30" font-family="Liberation Sans" font-size="22" fill="#f0443a" text-anchor="middle">Thu</text><text x="50" y="86" font-family="Liberation Sans" font-size="58" fill="#1c1c1e" text-anchor="middle">5</text></g></svg><svg style="left:1056.3px;top:1802px" width="71" height="71" viewBox="0 0 100 100"><defs><clipPath id="dc11"><rect width="100" height="100" rx="23"/></clipPath></defs><g clip-path="url(#dc11)"><rect x="0" y="0" width="100" height="100" rx="23" fill="#cfc9bd"/><rect x="86" y="10" width="14" height="22" fill="#34b0f0"/><rect x="86" y="32" width="14" height="24" fill="#f59d2a"/><rect x="86" y="56" width="14" height="24" fill="#3bc35c"/><circle cx="45" cy="48" r="33" fill="#8d8d92"/><circle cx="45" cy="38" r="12" fill="#f2f2f2"/><path d="M22 70 Q45 45 68 70 Q45 86 22 70Z" fill="#f2f2f2"/></g></svg><svg style="left:1152.5px;top:1802px" width="71" height="71" viewBox="0 0 100 100"><defs><clipPath id="dc12"><rect width="100" height="100" rx="23"/></clipPath></defs><g clip-path="url(#dc12)"><rect x="0" y="0" width="100" height="100" rx="23" fill="#fbfbfc"/><circle cx="24" cy="28" r="5" fill="#2d7cf6"/><rect x="40" y="27" width="44" height="2" fill="#d8d8dc"/><circle cx="24" cy="52" r="5" fill="#f5483a"/><rect x="40" y="51" width="44" height="2" fill="#d8d8dc"/><circle cx="24" cy="76" r="5" fill="#f79a1e"/><rect x="40" y="75" width="44" height="2" fill="#d8d8dc"/></g></svg><svg style="left:1247.0px;top:1802px" width="71" height="71" viewBox="0 0 100 100"><defs><clipPath id="dc13"><rect width="100" height="100" rx="23"/></clipPath></defs><g clip-path="url(#dc13)"><rect x="0" y="0" width="100" height="100" rx="23" fill="#fafaf8"/><path d="M0 23 A23 23 0 0 1 23 0 H77 A23 23 0 0 1 100 23 V30 H0Z" fill="#ffd52e"/><rect x="14" y="52" width="72" height="2" fill="#d0d0d0"/><rect x="14" y="74" width="72" height="2" fill="#d0d0d0"/></g></svg><svg style="left:1343.0px;top:1802px" width="71" height="71" viewBox="0 0 100 100"><defs><clipPath id="dc14"><rect width="100" height="100" rx="23"/></clipPath></defs><g clip-path="url(#dc14)"><rect x="0" y="0" width="100" height="100" rx="23" fill="#141414"/><path d="M30 38 c2-5 6-7 8-7 c0 4-3 7-8 7z M24 52 c0-9 7-12 10-12 c3 0 5 2 7 2 c2 0 4-2 7-2 c3 0 6 2 8 5 c-4 2-5 6-5 8 c0 5 3 7 5 8 c-1 4-5 10-9 10 c-2 0-4-2-6-2 c-2 0-4 2-6 2 c-5 0-11-10-11-21z" fill="#e8e8ea"/><text x="72" y="68" font-family="Liberation Sans" font-weight="700" font-size="36" fill="#e8e8ea" text-anchor="middle">tv</text></g></svg><svg style="left:1439.0px;top:1802px" width="71" height="71" viewBox="0 0 100 100"><defs><clipPath id="dc15"><rect width="100" height="100" rx="23"/></clipPath></defs><g clip-path="url(#dc15)"><defs><linearGradient id="mu" x1="0" y1="0" x2="0" y2="1"><stop offset="0" stop-color="#ff5a6e"/><stop offset="1" stop-color="#ee1d3a"/></linearGradient></defs><rect x="0" y="0" width="100" height="100" rx="23" fill="url(#mu)"/><path d="M38 28 L72 21 V64" fill="none" stroke="#fff" stroke-width="6"/><path d="M38 28 V72" stroke="#fff" stroke-width="6"/><ellipse cx="31" cy="72" rx="9" ry="7" fill="#fff"/><ellipse cx="65" cy="64" rx="9" ry="7" fill="#fff"/></g></svg><svg style="left:1535.0px;top:1802px" width="71" height="71" viewBox="0 0 100 100"><defs><clipPath id="dc16"><rect width="100" height="100" rx="23"/></clipPath></defs><g clip-path="url(#dc16)"><defs><linearGradient id="pa" x1="0" y1="0" x2="0" y2="1"><stop offset="0" stop-color="#ffb23a"/><stop offset="1" stop-color="#f7860e"/></linearGradient></defs><rect x="0" y="0" width="100" height="100" rx="23" fill="url(#pa)"/><path d="M28 80 L78 22 L84 28 L34 84Z" fill="#fff"/><path d="M26 88 H84" stroke="#ffe1b0" stroke-width="2" stroke-dasharray="2 2"/></g></svg><svg style="left:1631.0px;top:1802px" width="71" height="71" viewBox="0 0 100 100"><defs><clipPath id="dc17"><rect width="100" height="100" rx="23"/></clipPath></defs><g clip-path="url(#dc17)"><defs><linearGradient id="as" x1="0" y1="0" x2="0" y2="1"><stop offset="0" stop-color="#1fb4ff"/><stop offset="1" stop-color="#1a6af0"/></linearGradient></defs><rect x="0" y="0" width="100" height="100" rx="23" fill="url(#as)"/><path d="M50 20 L28 78 M50 20 L72 78 M20 62 H80" stroke="#e8f3ff" stroke-width="7" stroke-linecap="round"/></g></svg><svg style="left:1727.0px;top:1802px" width="71" height="71" viewBox="0 0 100 100"><defs><clipPath id="dc18"><rect width="100" height="100" rx="23"/></clipPath></defs><g clip-path="url(#dc18)"><defs><linearGradient id="ss" x1="0" y1="0" x2="0" y2="1"><stop offset="0" stop-color="#9c9ca3"/><stop offset="1" stop-color="#6d6d73"/></linearGradient></defs><rect x="0" y="0" width="100" height="100" rx="23" fill="url(#ss)"/><circle cx="50" cy="50" r="34" fill="none" stroke="#e4e4e7" stroke-width="6" stroke-dasharray="4 3"/><circle cx="50" cy="50" r="26" fill="none" stroke="#dcdce0" stroke-width="5"/><path d="M50 50 V26 M50 50 L29 62 M50 50 L71 62" stroke="#e4e4e7" stroke-width="5"/></g></svg><svg style="left:1822.7px;top:1802px" width="71" height="71" viewBox="0 0 100 100"><defs><clipPath id="dc19"><rect width="100" height="100" rx="23"/></clipPath></defs><g clip-path="url(#dc19)"><defs><linearGradient id="im" x1="0" y1="0" x2="0" y2="1"><stop offset="0" stop-color="#6fb2ff"/><stop offset="1" stop-color="#8a6ff0"/></linearGradient></defs><rect x="0" y="0" width="100" height="100" rx="23" fill="url(#im)"/><rect x="25" y="14" width="26" height="58" rx="6" fill="#1f3c5e"/><rect x="42" y="30" width="34" height="60" rx="7" fill="#e6ecf9"/></g></svg><div style="left:1927.5px;top:1788px;width:2px;height:100px;background:rgba(20,60,80,0.6)"></div><div style="left:2641.5px;top:1788px;width:2px;height:100px;background:rgba(20,60,80,0.6)"></div><svg style="left:1963.0px;top:1802px" width="71" height="71" viewBox="0 0 100 100"><defs><clipPath id="dc20"><rect width="100" height="100" rx="23"/></clipPath></defs><g clip-path="url(#dc20)"><rect x="0" y="0" width="100" height="100" rx="23" fill="#1c1c1e"/><path d="M18 32 L34 42 L18 52" fill="none" stroke="#f2f2f2" stroke-width="5"/><rect x="40" y="58" width="22" height="5" fill="#9a9a9e"/></g></svg><svg style="left:2059.0px;top:1802px" width="71" height="71" viewBox="0 0 100 100"><defs><clipPath id="dc21"><rect width="100" height="100" rx="23"/></clipPath></defs><g clip-path="url(#dc21)"><defs><linearGradient id="ln" x1="0" y1="0" x2="0" y2="1"><stop offset="0" stop-color="#8fc4ff"/><stop offset="1" stop-color="#3e7ff0"/></linearGradient></defs><rect x="0" y="0" width="100" height="100" rx="23" fill="url(#ln)"/><path d="M24 44 L76 44 L86 82 Q50 96 14 82Z" fill="#cfe4ff" opacity="0.8"/><ellipse cx="50" cy="30" rx="24" ry="14" fill="#2b2f36"/><ellipse cx="50" cy="27" rx="14" ry="7" fill="#4aa6e6"/></g></svg><svg style="left:2154.7px;top:1802px" width="71" height="71" viewBox="0 0 100 100"><defs><clipPath id="dc22"><rect width="100" height="100" rx="23"/></clipPath></defs><g clip-path="url(#dc22)"><rect x="0" y="0" width="100" height="100" rx="23" fill="#1d8cf3"/><path d="M12 52 H84 C86 72 70 86 46 86 C26 86 14 72 12 52Z" fill="#fff"/><rect x="28" y="41" width="9" height="8" fill="#fff"/><rect x="39" y="41" width="9" height="8" fill="#fff"/><rect x="50" y="41" width="9" height="8" fill="#fff"/><rect x="61" y="41" width="9" height="8" fill="#fff"/><rect x="39" y="31" width="9" height="8" fill="#fff"/><rect x="50" y="31" width="9" height="8" fill="#fff"/><rect x="50" y="21" width="9" height="8" fill="#fff"/><path d="M82 50 Q90 40 88 36" stroke="#fff" stroke-width="4" fill="none"/></g></svg><svg style="left:2251.0px;top:1802px" width="71" height="71" viewBox="0 0 100 100"><defs><clipPath id="dc23"><rect width="100" height="100" rx="23"/></clipPath></defs><g clip-path="url(#dc23)"><rect x="0" y="0" width="100" height="100" rx="23" fill="#f8f8f8"/><rect x="0" y="28" width="100" height="1.6" fill="#c8c8cc"/><rect x="0" y="50" width="100" height="1.6" fill="#c8c8cc"/><rect x="0" y="72" width="100" height="1.6" fill="#c8c8cc"/><rect x="24" y="0" width="2" height="100" fill="#f06a6a"/></g></svg><svg style="left:2346.7px;top:1802px" width="71" height="71" viewBox="0 0 100 100"><defs><clipPath id="dc24"><rect width="100" height="100" rx="23"/></clipPath></defs><g clip-path="url(#dc24)"><defs><linearGradient id="nu" x1="0" y1="0" x2="0" y2="1"><stop offset="0" stop-color="#5fe35f"/><stop offset="1" stop-color="#1fb83c"/></linearGradient></defs><rect x="0" y="0" width="100" height="100" rx="23" fill="url(#nu)"/><rect x="18" y="64" width="13" height="24" rx="3" fill="#f4fff4"/><rect x="38" y="46" width="13" height="42" rx="3" fill="#f4fff4"/><rect x="58" y="24" width="13" height="64" rx="3" fill="#f4fff4"/><rect x="78" y="40" width="13" height="48" rx="3" fill="#f4fff4"/></g></svg><svg style="left:2443.0px;top:1802px" width="71" height="71" viewBox="0 0 100 100"><defs><clipPath id="dc25"><rect width="100" height="100" rx="23"/></clipPath></defs><g clip-path="url(#dc25)"><rect x="0" y="0" width="100" height="100" rx="23" fill="#141414"/><path d="M50 14 L82 32 V68 L50 86 L18 68 V32Z" fill="#8a8a8e"/><path d="M50 14 L82 32 L50 50 L18 32Z" fill="#d8d8dc"/><path d="M50 50 L82 32 V68 L50 86Z" fill="#5a5a5e"/></g></svg><svg style="left:2538.7px;top:1802px" width="71" height="71" viewBox="0 0 100 100"><defs><clipPath id="dc26"><rect width="100" height="100" rx="23"/></clipPath></defs><g clip-path="url(#dc26)"><rect x="0" y="0" width="100" height="100" rx="23" fill="#e2694a"/><g stroke="#fff" stroke-width="6" stroke-linecap="round"><line x1="50" y1="50" x2="84.0" y2="50.0"/><line x1="50" y1="50" x2="80.6" y2="64.8"/><line x1="50" y1="50" x2="71.2" y2="76.6"/><line x1="50" y1="50" x2="57.6" y2="83.1"/><line x1="50" y1="50" x2="42.4" y2="83.1"/><line x1="50" y1="50" x2="28.8" y2="76.6"/><line x1="50" y1="50" x2="19.4" y2="64.8"/><line x1="50" y1="50" x2="16.0" y2="50.0"/><line x1="50" y1="50" x2="19.4" y2="35.2"/><line x1="50" y1="50" x2="28.8" y2="23.4"/><line x1="50" y1="50" x2="42.4" y2="16.9"/><line x1="50" y1="50" x2="57.6" y2="16.9"/><line x1="50" y1="50" x2="71.2" y2="23.4"/><line x1="50" y1="50" x2="80.6" y2="35.2"/></g></g></svg><svg style="left:2675px;top:1806px" width="72" height="60" viewBox="0 0 72 60"><rect x="6" y="0" width="64" height="50" fill="#f4f6fb" stroke="#c7d0e0"/><rect x="3" y="4" width="64" height="50" fill="#fafbfe" stroke="#c7d0e0"/><rect x="0" y="8" width="64" height="50" fill="#fff" stroke="#b9c3d6"/><rect x="0" y="8" width="12" height="50" fill="#222"/><rect x="16" y="14" width="30" height="3" fill="#6b7bd8"/><rect x="40" y="24" width="20" height="4" fill="#6b7bd8"/><rect x="16" y="32" width="40" height="2" fill="#ccc"/></svg><svg style="left:2772px;top:1800px" width="66" height="74" viewBox="0 0 66 74"><path d="M4 14 H62 L56 72 H10Z" fill="#dfe3e8" stroke="#c4cad2"/><ellipse cx="33" cy="14" rx="29" ry="5" fill="#c8ced6"/><path d="M18 10 L28 2 L36 10 Z" fill="#5bc0f8"/><path d="M36 8 L48 0 L52 10Z" fill="#f7c948"/><path d="M24 8 L20 2 L30 4Z" fill="#ef6bb0"/></svg><div style="left:126.5px;top:1885px;width:9px;height:9px;border-radius:50%;background:#0b2a44"></div><div style="left:319.5px;top:1885px;width:9px;height:9px;border-radius:50%;background:#0b2a44"></div><div style="left:414.5px;top:1885px;width:9px;height:9px;border-radius:50%;background:#0b2a44"></div><div style="left:510.5px;top:1885px;width:9px;height:9px;border-radius:50%;background:#0b2a44"></div><div style="left:606.5px;top:1885px;width:9px;height:9px;border-radius:50%;background:#0b2a44"></div><div style="left:991.5px;top:1885px;width:9px;height:9px;border-radius:50%;background:#0b2a44"></div><div style="left:1276.5px;top:1885px;width:9px;height:9px;border-radius:50%;background:#0b2a44"></div><div style="left:1372.5px;top:1885px;width:9px;height:9px;border-radius:50%;background:#0b2a44"></div><div style="left:1469.5px;top:1885px;width:9px;height:9px;border-radius:50%;background:#0b2a44"></div><div style="left:1565.5px;top:1885px;width:9px;height:9px;border-radius:50%;background:#0b2a44"></div><div style="left:1992.5px;top:1885px;width:9px;height:9px;border-radius:50%;background:#0b2a44"></div><div style="left:2089.5px;top:1885px;width:9px;height:9px;border-radius:50%;background:#0b2a44"></div><div style="left:2184.5px;top:1885px;width:9px;height:9px;border-radius:50%;background:#0b2a44"></div><div style="left:2280.5px;top:1885px;width:9px;height:9px;border-radius:50%;background:#0b2a44"></div><div style="left:2377.5px;top:1885px;width:9px;height:9px;border-radius:50%;background:#0b2a44"></div><div style="left:2472.5px;top:1885px;width:9px;height:9px;border-radius:50%;background:#0b2a44"></div><div style="left:2568.5px;top:1885px;width:9px;height:9px;border-radius:50%;background:#0b2a44"></div>
</body></html>
